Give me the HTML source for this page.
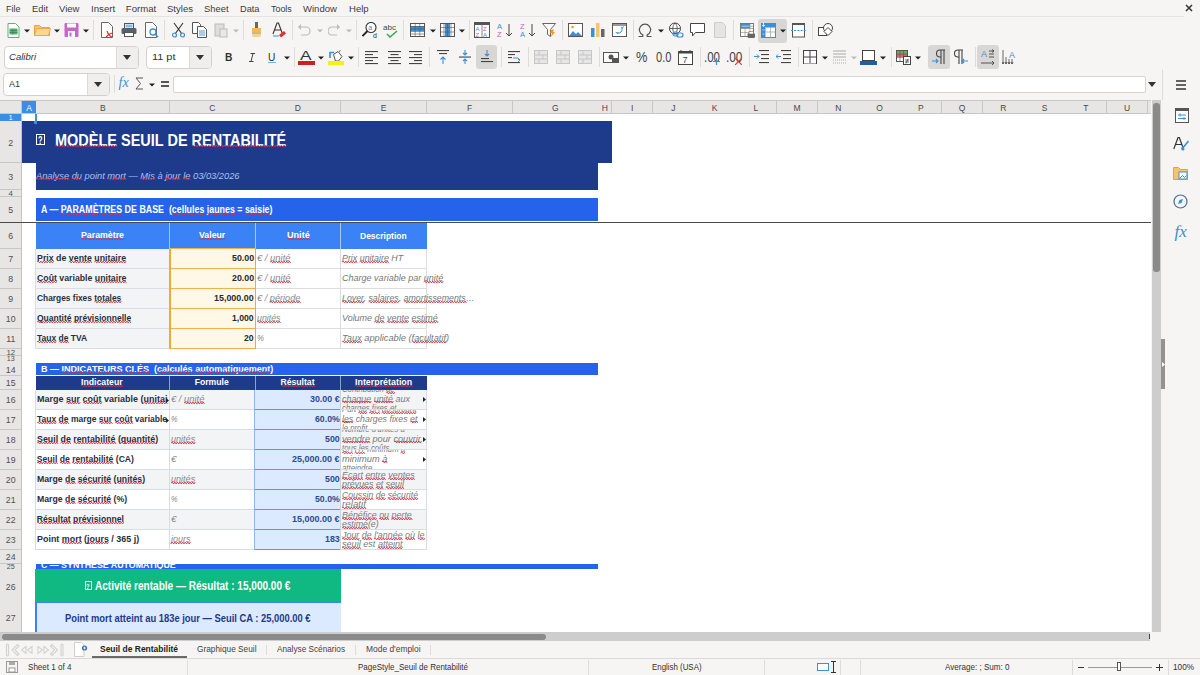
<!DOCTYPE html>
<html><head><meta charset="utf-8">
<style>
*{box-sizing:border-box;margin:0;padding:0}
html,body{width:1200px;height:675px;overflow:hidden;background:#f6f5f4;font-family:"Liberation Sans",sans-serif;position:relative}
.t{position:absolute;white-space:pre;line-height:normal;transform-origin:0 0}
.r{position:absolute}
.ic{position:absolute}
u{text-decoration:underline wavy #d83030;text-decoration-thickness:0.5px;text-underline-offset:0.5px}
</style></head><body>
<div class="t" style="left:5.80px;top:3.31px;font-size:9.60px;color:#3c3c3c;transform:scaleX(0.9374);">File</div>
<div class="t" style="left:31.70px;top:3.31px;font-size:9.60px;color:#3c3c3c;transform:scaleX(0.9732);">Edit</div>
<div class="t" style="left:58.70px;top:3.31px;font-size:9.60px;color:#3c3c3c;transform:scaleX(0.9934);">View</div>
<div class="t" style="left:90.80px;top:3.31px;font-size:9.60px;color:#3c3c3c;transform:scaleX(1.0077);">Insert</div>
<div class="t" style="left:125.80px;top:3.31px;font-size:9.60px;color:#3c3c3c;">Format</div>
<div class="t" style="left:167.00px;top:3.31px;font-size:9.60px;color:#3c3c3c;transform:scaleX(0.9945);">Styles</div>
<div class="t" style="left:204.20px;top:3.31px;font-size:9.60px;color:#3c3c3c;transform:scaleX(0.9765);">Sheet</div>
<div class="t" style="left:239.70px;top:3.31px;font-size:9.60px;color:#3c3c3c;transform:scaleX(0.9615);">Data</div>
<div class="t" style="left:271.20px;top:3.31px;font-size:9.60px;color:#3c3c3c;transform:scaleX(0.9280);">Tools</div>
<div class="t" style="left:303.30px;top:3.31px;font-size:9.60px;color:#3c3c3c;transform:scaleX(0.9927);">Window</div>
<div class="t" style="left:348.70px;top:3.31px;font-size:9.60px;color:#3c3c3c;transform:scaleX(0.9926);">Help</div>
<div class="r" style="left:0.00px;top:16.00px;width:1184.00px;height:1.00px;background:#e6e4e2;"></div>
<svg class="ic" style="left:6.50px;top:23.00px" width="13" height="15" viewBox="0 0 13 15"><path d="M1 .5h7.5l3.5 3.5v10.5h-11z" fill="#fff" stroke="#5cb474"/><rect x="2.5" y="5.5" width="8" height="6" fill="#5cb474"/><path d="M2.5 7.5h8M2.5 9.5h8M6 5.5v6" stroke="#2f6e44" stroke-width=".5"/></svg>
<svg class="ic" style="left:24.00px;top:29.00px" width="6" height="4" viewBox="0 0 6 4"><path d="M0 0.5h6l-3 3z" fill="#222"/></svg>
<svg class="ic" style="left:34.00px;top:23.00px" width="17" height="14" viewBox="0 0 17 14"><path d="M.5 2.5v10h15v-8h-8l-2-2h-5z" fill="#f7c46c" stroke="#e8a33d"/><path d="M.5 12.5l2-7h14l-2 7z" fill="#fbd88e" stroke="#e8a33d" stroke-width=".8"/></svg>
<svg class="ic" style="left:54.00px;top:29.00px" width="6" height="4" viewBox="0 0 6 4"><path d="M0 0.5h6l-3 3z" fill="#222"/></svg>
<svg class="ic" style="left:64.00px;top:22.00px" width="15" height="16" viewBox="0 0 15 16"><rect x=".5" y="1" width="14" height="14" rx="1" fill="#c767c9"/><rect x="3" y="1.5" width="9" height="4" fill="#fff"/><rect x="4" y="9" width="7" height="6" fill="#fff"/><rect x="5.5" y="10.5" width="2" height="4" fill="#c767c9"/></svg>
<svg class="ic" style="left:83.00px;top:29.00px" width="6" height="4" viewBox="0 0 6 4"><path d="M0 0.5h6l-3 3z" fill="#222"/></svg>
<div class="r" style="left:93.00px;top:20.00px;width:1.00px;height:20.00px;background:#dedcda;"></div>
<svg class="ic" style="left:100.00px;top:22.00px" width="14" height="16" viewBox="0 0 14 16"><path d="M1.5 .5h7l4 4v11h-11z" fill="#fff" stroke="#666"/><path d="M7 9c1 3 2 5 5 6M6 15c2-2 4-4 7-4" stroke="#e03030" stroke-width="1.2" fill="none"/></svg>
<svg class="ic" style="left:121.00px;top:23.00px" width="16" height="14" viewBox="0 0 16 14"><rect x="3.5" y=".5" width="9" height="5" fill="#fff" stroke="#555"/><rect x="4.5" y="1.5" width="7" height="3" fill="#7cc0f0"/><rect x=".5" y="5" width="15" height="6" rx="1.5" fill="#5a6069"/><rect x="3.5" y="9.5" width="9" height="4" fill="#fff" stroke="#555"/></svg>
<svg class="ic" style="left:144.00px;top:22.00px" width="15" height="16" viewBox="0 0 15 16"><path d="M1.5 .5h7l4 4v11h-11z" fill="#fff" stroke="#666"/><circle cx="9" cy="10" r="3" fill="#fff" stroke="#3a8fd6" stroke-width="1.3"/><path d="M11 12l3 3" stroke="#3a8fd6" stroke-width="1.5"/></svg>
<div class="r" style="left:164.00px;top:20.00px;width:1.00px;height:20.00px;background:#dedcda;"></div>
<svg class="ic" style="left:172.00px;top:22.00px" width="13" height="16" viewBox="0 0 13 16"><path d="M2 1l8 11M11 1l-8 11" stroke="#333" stroke-width="1.1"/><circle cx="2.5" cy="13" r="2" fill="none" stroke="#3a8fd6" stroke-width="1.2"/><circle cx="10.5" cy="13" r="2" fill="none" stroke="#3a8fd6" stroke-width="1.2"/></svg>
<svg class="ic" style="left:192.00px;top:22.00px" width="16" height="16" viewBox="0 0 16 16"><path d="M.5 .5h6l2 2v9h-8z" fill="#fff" stroke="#555"/><path d="M5.5 4.5h6l3 3v8h-9z" fill="#fff" stroke="#555"/><path d="M7 9h6M7 11h6M7 13h6" stroke="#3a8fd6" stroke-width=".9"/></svg>
<svg class="ic" style="left:214.00px;top:22.00px" width="14" height="16" viewBox="0 0 14 16"><rect x="1" y="2" width="9" height="12" fill="#ddd" stroke="#bbb"/><rect x="6" y="7" width="7" height="8" fill="#e8e8e8" stroke="#bbb"/></svg>
<svg class="ic" style="left:232.50px;top:29.00px" width="6" height="4" viewBox="0 0 6 4"><path d="M0 0.5h6l-3 3z" fill="#bbb"/></svg>
<div class="r" style="left:243.00px;top:20.00px;width:1.00px;height:20.00px;background:#dedcda;"></div>
<svg class="ic" style="left:251.00px;top:22.00px" width="11" height="16" viewBox="0 0 11 16"><rect x="4" y="0" width="3" height="6" fill="#666"/><path d="M1 6h9v4h-9z" fill="#f7b560"/><path d="M1 10h9l-.5 5h-8z" fill="#f9cf8a"/><path d="M1 11h9" stroke="#888" stroke-width=".7"/></svg>
<svg class="ic" style="left:272.00px;top:22.00px" width="14" height="16" viewBox="0 0 14 16"><path d="M1 12l4-11h1.5l4 11M2.5 8h6" stroke="#333" stroke-width="1.1" fill="none"/><path d="M1 14h6" stroke="#3a8fd6"/><path d="M7 13l5-4 2 2.5-5 4z" fill="#e03030"/></svg>
<div class="r" style="left:292.00px;top:20.00px;width:1.00px;height:20.00px;background:#dedcda;"></div>
<svg class="ic" style="left:297.00px;top:23.00px" width="14" height="14" viewBox="0 0 14 14"><path d="M3 4h6a4 4 0 010 8h-5" stroke="#bbb" stroke-width="1.2" fill="none"/><path d="M1 4l3-3v6z" fill="#bbb"/></svg>
<svg class="ic" style="left:317.00px;top:29.00px" width="6" height="4" viewBox="0 0 6 4"><path d="M0 0.5h6l-3 3z" fill="#bbb"/></svg>
<svg class="ic" style="left:328.00px;top:23.00px" width="13" height="14" viewBox="0 0 13 14"><path d="M10 4h-6a4 4 0 000 8h5" stroke="#bbb" stroke-width="1.2" fill="none"/><path d="M12 4l-3-3v6z" fill="#bbb"/></svg>
<svg class="ic" style="left:346.00px;top:29.00px" width="6" height="4" viewBox="0 0 6 4"><path d="M0 0.5h6l-3 3z" fill="#bbb"/></svg>
<div class="r" style="left:356.00px;top:20.00px;width:1.00px;height:20.00px;background:#dedcda;"></div>
<svg class="ic" style="left:362.00px;top:22.00px" width="16" height="16" viewBox="0 0 16 16"><circle cx="9" cy="5.5" r="5" fill="#fff" stroke="#333" stroke-width="1.1"/><text x="6.3" y="8" font-size="7" fill="#3a8fd6" font-family="Liberation Sans">a</text><path d="M5.5 9l-5 5" stroke="#222" stroke-width="1.8"/><text x="11" y="16" font-size="7" fill="#333" font-family="Liberation Sans">d</text></svg>
<svg class="ic" style="left:383.00px;top:22.00px" width="16" height="16" viewBox="0 0 16 16"><text x="0" y="8" font-size="8" fill="#444" font-family="Liberation Sans">abc</text><path d="M4 12l3 3 7-6" stroke="#3aaa5a" stroke-width="1.6" fill="none"/></svg>
<div class="r" style="left:403.00px;top:20.00px;width:1.00px;height:20.00px;background:#dedcda;"></div>
<svg class="ic" style="left:410.00px;top:23.00px" width="15" height="14" viewBox="0 0 15 14"><rect x=".5" y=".5" width="14" height="13" fill="#fff" stroke="#555"/><rect x="1" y="3" width="13" height="5" fill="#3a8fd6"/><path d="M5.2 1v12M9.8 1v12M1 3.5h13M1 6h13M1 8.5h13M1 11h13" stroke="#555" stroke-width=".6"/></svg>
<svg class="ic" style="left:429.50px;top:29.00px" width="6" height="4" viewBox="0 0 6 4"><path d="M0 0.5h6l-3 3z" fill="#222"/></svg>
<svg class="ic" style="left:440.00px;top:23.00px" width="15" height="14" viewBox="0 0 15 14"><rect x=".5" y=".5" width="14" height="13" fill="#fff" stroke="#555"/><rect x="5" y="1" width="5" height="12" fill="#3a8fd6"/><path d="M4 1v12M7.5 1v12M11 1v12M1 4.5h13M1 9h13" stroke="#555" stroke-width=".6"/></svg>
<svg class="ic" style="left:459.00px;top:29.00px" width="6" height="4" viewBox="0 0 6 4"><path d="M0 0.5h6l-3 3z" fill="#222"/></svg>
<div class="r" style="left:469.00px;top:20.00px;width:1.00px;height:20.00px;background:#dedcda;"></div>
<svg class="ic" style="left:474.00px;top:22.00px" width="16" height="16" viewBox="0 0 16 16"><rect x=".5" y=".5" width="15" height="15" fill="#fff" stroke="#555"/><rect x="1" y="1" width="14" height="2" fill="#555"/><text x="1.5" y="9" font-size="6" fill="#3a8fd6" font-family="Liberation Sans">A</text><text x="9" y="9" font-size="6" fill="#c060c0" font-family="Liberation Sans">Z</text><text x="1.5" y="15" font-size="6" fill="#c060c0" font-family="Liberation Sans">Z</text><text x="9" y="15" font-size="6" fill="#3a8fd6" font-family="Liberation Sans">A</text><path d="M8 3v13" stroke="#555" stroke-width=".7"/></svg>
<svg class="ic" style="left:497.00px;top:22.00px" width="16" height="16" viewBox="0 0 16 16"><text x="0" y="7" font-size="7.5" fill="#3a8fd6" font-family="Liberation Sans">A</text><text x="0" y="15" font-size="7.5" fill="#c060c0" font-family="Liberation Sans">Z</text><path d="M12 2v12M9 11l3 3 3-3" stroke="#444" stroke-width="1" fill="none"/></svg>
<svg class="ic" style="left:520.00px;top:22.00px" width="16" height="16" viewBox="0 0 16 16"><text x="0" y="7" font-size="7.5" fill="#c060c0" font-family="Liberation Sans">Z</text><text x="0" y="15" font-size="7.5" fill="#3a8fd6" font-family="Liberation Sans">A</text><path d="M12 2v12M9 11l3 3 3-3" stroke="#444" stroke-width="1" fill="none"/></svg>
<svg class="ic" style="left:542.00px;top:22.00px" width="14" height="16" viewBox="0 0 14 16"><path d="M.5 1.5h13l-5 6v7l-3-2v-5z" fill="#fff" stroke="#666"/><path d="M9 8l3-1-1 3 2 0-4 5 1-4h-2z" fill="#f59a20"/></svg>
<div class="r" style="left:562.00px;top:20.00px;width:1.00px;height:20.00px;background:#dedcda;"></div>
<svg class="ic" style="left:568.00px;top:23.00px" width="15" height="14" viewBox="0 0 15 14"><rect x=".5" y=".5" width="14" height="13" fill="#fff" stroke="#555"/><path d="M1 13l4-5 3 3 2-2 4 4z" fill="#3a8fd6"/><circle cx="4.5" cy="4" r="1.3" fill="#f59a20"/></svg>
<svg class="ic" style="left:591.00px;top:23.00px" width="14" height="14" viewBox="0 0 14 14"><rect x="0" y="5" width="3.5" height="9" fill="#3a8fd6"/><rect x="5" y="0" width="3.5" height="14" fill="#f7c46c"/><rect x="10" y="6" width="3.5" height="8" fill="#666"/></svg>
<svg class="ic" style="left:612.00px;top:23.00px" width="15" height="14" viewBox="0 0 15 14"><rect x=".5" y=".5" width="14" height="13" fill="#fff" stroke="#555"/><rect x="1" y="1" width="13" height="2" fill="#999"/><path d="M5 10a4 4 0 005-5M9 4l1.5 1 1-1.5M4 9l1 1.5 1.5-1" stroke="#3a8fd6" fill="none" stroke-width="1"/></svg>
<div class="r" style="left:633.00px;top:20.00px;width:1.00px;height:20.00px;background:#dedcda;"></div>
<svg class="ic" style="left:638.00px;top:23.00px" width="14" height="15" viewBox="0 0 14 15"><path d="M.5 13.5h4.3v-1.6A5.6 5.6 0 1 1 9.2 11.9v1.6h4.3" stroke="#555" stroke-width="1.2" fill="none"/></svg>
<svg class="ic" style="left:657.50px;top:29.00px" width="6" height="4" viewBox="0 0 6 4"><path d="M0 0.5h6l-3 3z" fill="#222"/></svg>
<svg class="ic" style="left:668.00px;top:22.00px" width="16" height="16" viewBox="0 0 16 16"><circle cx="7" cy="6.5" r="5.5" fill="#fff" stroke="#444"/><path d="M1.5 6.5h11M7 1c-3 3-3 8 0 11M7 1c3 3 3 8 0 11" stroke="#444" stroke-width=".8" fill="none"/><rect x="5" y="10" width="5" height="4" rx="2" fill="none" stroke="#3a8fd6" stroke-width="1.2"/><rect x="9" y="11" width="6" height="4" rx="2" fill="none" stroke="#3a8fd6" stroke-width="1.2"/></svg>
<svg class="ic" style="left:690.00px;top:23.00px" width="15" height="14" viewBox="0 0 15 14"><path d="M.5 .5h14v9h-9l-3 3.5v-3.5h-2z" fill="#fff" stroke="#444"/></svg>
<svg class="ic" style="left:714.00px;top:22.00px" width="12" height="16" viewBox="0 0 12 16"><path d="M.5 .5h8l3 3v12h-11z" fill="#e4e4e4" stroke="#ccc"/></svg>
<div class="r" style="left:733.00px;top:20.00px;width:1.00px;height:20.00px;background:#dedcda;"></div>
<svg class="ic" style="left:740.00px;top:22.50px" width="15" height="16" viewBox="0 0 15 16"><rect x=".5" y=".5" width="13" height="13" fill="#fff" stroke="#777"/><rect x="1" y="1" width="9" height="4.5" fill="#3a8fd6"/><path d="M5 1v12.5M10 1v12.5M1 3.2h12.5M1 5.5h12.5M1 9.5h12.5" stroke="#888" stroke-width=".6"/><path d="M1.5 3.2h8" stroke="#fff" stroke-width=".6"/><rect x="7.5" y="10" width="7.5" height="5" rx="1.5" fill="#666"/><rect x="9" y="8.5" width="4.5" height="2.5" fill="#fff" stroke="#666" stroke-width=".6"/></svg>
<div class="r" style="left:758.00px;top:19.00px;width:29.00px;height:23.50px;background:#d9d7d5;border-radius:3px;"></div>
<svg class="ic" style="left:760.50px;top:22.00px" width="15" height="16" viewBox="0 0 15 16"><rect x=".5" y="1.5" width="14" height="14" fill="#fff" stroke="#3a8fd6"/><rect x="1" y="2" width="13" height="3" fill="#3a8fd6"/><rect x="1" y="2" width="3.5" height="13" fill="#3a8fd6"/><path d="M4.5 5.5h10M4.5 10h10M9.5 5v10.5" stroke="#999" stroke-width=".7"/><path d="M2.5 .5v4M1 3l1.5 1.5L4 3" stroke="#fff" stroke-width=".8" fill="none"/><path d="M1.5 8h2M1.5 12h2" stroke="#fff" stroke-width=".6"/></svg>
<svg class="ic" style="left:780.00px;top:29.00px" width="6" height="4" viewBox="0 0 6 4"><path d="M0 0.5h6l-3 3z" fill="#222"/></svg>
<svg class="ic" style="left:791.00px;top:23.00px" width="15" height="15" viewBox="0 0 15 15"><rect x="1.5" y=".5" width="12" height="13.5" fill="#fff" stroke="#555"/><rect x="1.5" y=".5" width="12" height="1.5" fill="#555"/><path d="M0 7.5h15" stroke="#3a8fd6" stroke-dasharray="2 1.2" stroke-width="1"/></svg>
<div class="r" style="left:812.00px;top:20.00px;width:1.00px;height:20.00px;background:#dedcda;"></div>
<svg class="ic" style="left:818.00px;top:22.00px" width="15" height="16" viewBox="0 0 15 16"><rect x=".5" y="5.5" width="8" height="8" fill="#fff" stroke="#444"/><circle cx="10" cy="6" r="4.5" fill="#fff" stroke="#444"/><path d="M6 9.5l4 4 4-4-4-4z" fill="#fff" stroke="#444"/></svg>
<div class="r" style="left:3.50px;top:45.50px;width:135.50px;height:23.00px;background:#fff;border:1px solid #d3d1cf;border-radius:4px;"></div>
<div class="r" style="left:116.00px;top:46.50px;width:22.00px;height:21.00px;background:#efeeed;border-left:1px solid #dcdad8;border-radius:0 3px 3px 0;"></div>
<div class="t" style="left:9.20px;top:51.81px;font-size:9.05px;color:#333;font-style:italic;transform:scaleX(1.0563);">Calibri</div>
<svg class="ic" style="left:123.00px;top:55.00px" width="8" height="5" viewBox="0 0 8 5"><path d="M0 0h8l-4 5z" fill="#333"/></svg>
<div class="r" style="left:146.00px;top:45.50px;width:66.00px;height:23.00px;background:#fff;border:1px solid #d3d1cf;border-radius:4px;"></div>
<div class="r" style="left:189.00px;top:46.50px;width:22.00px;height:21.00px;background:#efeeed;border-left:1px solid #dcdad8;border-radius:0 3px 3px 0;"></div>
<div class="t" style="left:152.00px;top:51.81px;font-size:9.05px;color:#333;transform:scaleX(1.2073);">11 pt</div>
<svg class="ic" style="left:196.00px;top:55.00px" width="8" height="5" viewBox="0 0 8 5"><path d="M0 0h8l-4 5z" fill="#333"/></svg>
<div class="t" style="left:224.70px;top:50.67px;font-size:11.52px;color:#333;font-weight:bold;transform:scaleX(0.8894);">B</div>
<svg class="ic" style="left:248.50px;top:52.50px" width="6" height="9" viewBox="0 0 6 9"><path d="M1.5 .5h4.5M0 8.5h4.5M4 .5L2 8.5" stroke="#444" stroke-width="1" fill="none"/></svg>
<div class="t" style="left:268.10px;top:50.70px;font-size:11.39px;color:#333;transform:scaleX(0.8882);">U</div>
<div class="r" style="left:268.00px;top:62.20px;width:8.00px;height:1.00px;background:#7ab0e0;"></div>
<svg class="ic" style="left:284.00px;top:56.30px" width="6" height="4" viewBox="0 0 6 4"><path d="M0 0.5h6l-3 3z" fill="#222"/></svg>
<div class="r" style="left:294.00px;top:47.00px;width:1.00px;height:20.00px;background:#dedcda;"></div>
<div class="t" style="left:299.50px;top:49.13px;font-size:12.35px;color:#333;transform:scaleX(1.3966);">A</div>
<div class="r" style="left:298.00px;top:61.00px;width:16.50px;height:3.50px;background:#c9211e;"></div>
<svg class="ic" style="left:318.00px;top:56.30px" width="6" height="4" viewBox="0 0 6 4"><path d="M0 0.5h6l-3 3z" fill="#222"/></svg>
<svg class="ic" style="left:328.00px;top:50.00px" width="16" height="12" viewBox="0 0 16 12"><path d="M2 8V2.5h4" stroke="#3a8fd6" stroke-width="1.6" fill="none"/><path d="M5.5 4.5l4.5-3 4 5-3.5 4.5h-3z" fill="#fff" stroke="#555" stroke-width="1"/><path d="M11 1.5l1.5-1" stroke="#555"/></svg>
<div class="r" style="left:328.00px;top:61.00px;width:16.00px;height:3.50px;background:#f2f20a;"></div>
<svg class="ic" style="left:347.50px;top:56.30px" width="6" height="4" viewBox="0 0 6 4"><path d="M0 0.5h6l-3 3z" fill="#222"/></svg>
<div class="r" style="left:358.00px;top:47.00px;width:1.00px;height:20.00px;background:#dedcda;"></div>
<svg class="ic" style="left:365.00px;top:51.00px" width="14" height="14" viewBox="0 0 14 14"><rect x="0" y="0" width="13" height="1.1" fill="#444"/><rect x="0" y="3" width="8" height="1.1" fill="#444"/><rect x="0" y="6" width="13" height="1.1" fill="#444"/><rect x="0" y="9" width="8" height="1.1" fill="#444"/><rect x="0" y="12" width="13" height="1.1" fill="#444"/></svg>
<svg class="ic" style="left:387.50px;top:51.00px" width="14" height="14" viewBox="0 0 14 14"><rect x="0" y="0" width="13" height="1.1" fill="#444"/><rect x="2.5" y="3" width="8" height="1.1" fill="#444"/><rect x="0" y="6" width="13" height="1.1" fill="#444"/><rect x="2.5" y="9" width="8" height="1.1" fill="#444"/><rect x="0" y="12" width="13" height="1.1" fill="#444"/></svg>
<svg class="ic" style="left:409.00px;top:51.00px" width="14" height="14" viewBox="0 0 14 14"><rect x="0" y="0" width="13" height="1.1" fill="#444"/><rect x="5" y="3" width="8" height="1.1" fill="#444"/><rect x="0" y="6" width="13" height="1.1" fill="#444"/><rect x="5" y="9" width="8" height="1.1" fill="#444"/><rect x="0" y="12" width="13" height="1.1" fill="#444"/></svg>
<div class="r" style="left:429.00px;top:47.00px;width:1.00px;height:20.00px;background:#dedcda;"></div>
<svg class="ic" style="left:436.50px;top:49.00px" width="13" height="16" viewBox="0 0 13 16"><rect x="0" y="1" width="12" height="1.1" fill="#444"/><rect x="2" y="4" width="8" height="1.1" fill="#444"/><path d="M6 15V8M3.5 10.5L6 8l2.5 2.5" stroke="#3a8fd6" stroke-width="1.1" fill="none"/></svg>
<svg class="ic" style="left:459.00px;top:49.00px" width="12" height="16" viewBox="0 0 12 16"><rect x="0" y="7.5" width="12" height="1.1" fill="#444"/><path d="M6 1v5M4 4l2 2 2-2M6 15v-5M4 12l2-2 2 2" stroke="#3a8fd6" stroke-width="1.1" fill="none"/></svg>
<div class="r" style="left:475.50px;top:45.00px;width:21.50px;height:24.00px;background:#d9d7d5;border-radius:3px;"></div>
<svg class="ic" style="left:480.50px;top:49.00px" width="12" height="16" viewBox="0 0 12 16"><rect x="0" y="12" width="12" height="1.1" fill="#444"/><rect x="0" y="9" width="8" height="1.1" fill="#444"/><path d="M6 1v6M4 5l2 2 2-2" stroke="#3a8fd6" stroke-width="1.1" fill="none"/></svg>
<div class="r" style="left:500.50px;top:47.00px;width:1.00px;height:20.00px;background:#dedcda;"></div>
<svg class="ic" style="left:507.50px;top:49.00px" width="14" height="16" viewBox="0 0 14 16"><rect x="0" y="2" width="12" height="1.1" fill="#444"/><rect x="0" y="5" width="7" height="1.1" fill="#444"/><rect x="0" y="8" width="4" height="1.1" fill="#444"/><rect x="0" y="13" width="12" height="1.1" fill="#444"/><path d="M5 9h5l2 2-2 2M12 11l-2-1" stroke="#3a8fd6" stroke-width="1" fill="none"/></svg>
<div class="r" style="left:527.50px;top:47.00px;width:1.00px;height:20.00px;background:#dedcda;"></div>
<svg class="ic" style="left:534.00px;top:50.00px" width="14" height="14" viewBox="0 0 14 14"><rect x=".5" y=".5" width="13" height="13" fill="#e6e6e6" stroke="#c6c6c6"/><path d="M1 5h12M1 9h12M5 1v4M9 5v4M5 9v4" stroke="#c6c6c6"/></svg>
<svg class="ic" style="left:556.00px;top:50.00px" width="14" height="14" viewBox="0 0 14 14"><rect x=".5" y=".5" width="13" height="13" fill="#e6e6e6" stroke="#c6c6c6"/><path d="M1 5h12M1 9h12M5 1v4M9 5v4M5 9v4" stroke="#c6c6c6"/></svg>
<svg class="ic" style="left:578.00px;top:50.00px" width="14" height="14" viewBox="0 0 14 14"><rect x=".5" y=".5" width="13" height="13" fill="#e6e6e6" stroke="#c6c6c6"/><path d="M1 5h12M1 9h12M5 1v4M9 5v4M5 9v4" stroke="#c6c6c6"/></svg>
<div class="r" style="left:598.50px;top:47.00px;width:1.00px;height:20.00px;background:#dedcda;"></div>
<svg class="ic" style="left:603.00px;top:50.00px" width="16" height="14" viewBox="0 0 16 14"><rect x=".5" y="2.5" width="15" height="10" fill="#fff" stroke="#555"/><circle cx="8" cy="7" r="2.5" fill="#555"/><rect x="9" y="8" width="6" height="5" fill="#555"/></svg>
<svg class="ic" style="left:623.00px;top:56.30px" width="6" height="4" viewBox="0 0 6 4"><path d="M0 0.5h6l-3 3z" fill="#222"/></svg>
<div class="t" style="left:636.00px;top:50.09px;font-size:13.72px;color:#444;transform:scaleX(0.9348);">%</div>
<div class="t" style="left:655.60px;top:50.09px;font-size:13.72px;color:#444;transform:scaleX(0.8077);">0.0</div>
<svg class="ic" style="left:678.00px;top:49.00px" width="15" height="16" viewBox="0 0 15 16"><rect x=".5" y="2.5" width="14" height="13" fill="#fff" stroke="#444"/><rect x=".5" y="2.5" width="14" height="2" fill="#444"/><path d="M3 1v3M12 1v3" stroke="#444"/><text x="4.5" y="14" font-size="9" fill="#444" font-family="Liberation Sans">7</text></svg>
<div class="r" style="left:699.50px;top:47.00px;width:1.00px;height:20.00px;background:#dedcda;"></div>
<div class="t" style="left:704.00px;top:50.09px;font-size:13.72px;color:#444;transform:scaleX(0.8392);">.00</div>
<svg class="ic" style="left:713.00px;top:58.00px" width="7" height="7" viewBox="0 0 7 7"><path d="M3.5 0v7M0 3.5h7" stroke="#3a8fd6" stroke-width="1.2"/></svg>
<div class="t" style="left:726.00px;top:50.09px;font-size:13.72px;color:#444;transform:scaleX(0.8602);">.00</div>
<svg class="ic" style="left:735.00px;top:58.00px" width="7" height="7" viewBox="0 0 7 7"><path d="M0 0l7 7M7 0l-7 7" stroke="#e03030" stroke-width="1.2"/></svg>
<div class="r" style="left:748.50px;top:47.00px;width:1.00px;height:20.00px;background:#dedcda;"></div>
<svg class="ic" style="left:754.00px;top:50.00px" width="15" height="14" viewBox="0 0 15 14"><rect x="5" y="0" width="10" height="1.1" fill="#444"/><rect x="7" y="4" width="8" height="1.1" fill="#444"/><rect x="7" y="8" width="8" height="1.1" fill="#444"/><rect x="5" y="12" width="10" height="1.1" fill="#444"/><path d="M0 6.5h5M3 4.5l2 2-2 2" stroke="#3a8fd6" stroke-width="1" fill="none"/></svg>
<svg class="ic" style="left:776.00px;top:50.00px" width="15" height="14" viewBox="0 0 15 14"><rect x="5" y="0" width="10" height="1.1" fill="#444"/><rect x="7" y="4" width="8" height="1.1" fill="#444"/><rect x="7" y="8" width="8" height="1.1" fill="#444"/><rect x="5" y="12" width="10" height="1.1" fill="#444"/><path d="M0 6.5h5M2 4.5l-2 2 2 2" stroke="#3a8fd6" stroke-width="1" fill="none"/></svg>
<div class="r" style="left:797.50px;top:47.00px;width:1.00px;height:20.00px;background:#dedcda;"></div>
<svg class="ic" style="left:803.00px;top:50.00px" width="14" height="14" viewBox="0 0 14 14"><rect x=".5" y=".5" width="13" height="13" fill="#fff" stroke="#444"/><path d="M7 1v12M1 7h12" stroke="#444"/><path d="M1 13.5h12" stroke="#f59a20"/></svg>
<svg class="ic" style="left:821.50px;top:56.30px" width="6" height="4" viewBox="0 0 6 4"><path d="M0 0.5h6l-3 3z" fill="#222"/></svg>
<svg class="ic" style="left:833.00px;top:50.00px" width="13" height="14" viewBox="0 0 13 14"><path d="M0 1h13M0 4h13M0 7h13" stroke="#aaa" stroke-width="1.2"/><path d="M0 10h13M0 13h13" stroke="#aaa" stroke-dasharray="1 1"/></svg>
<svg class="ic" style="left:851.00px;top:56.30px" width="6" height="4" viewBox="0 0 6 4"><path d="M0 0.5h6l-3 3z" fill="#bbb"/></svg>
<svg class="ic" style="left:860.00px;top:50.00px" width="17" height="15" viewBox="0 0 17 15"><rect x="2.5" y=".5" width="12" height="10" fill="#fff" stroke="#444"/><rect x="0" y="11" width="17" height="4" fill="#1f5fa8"/></svg>
<svg class="ic" style="left:880.00px;top:56.30px" width="6" height="4" viewBox="0 0 6 4"><path d="M0 0.5h6l-3 3z" fill="#222"/></svg>
<div class="r" style="left:890.50px;top:47.00px;width:1.00px;height:20.00px;background:#dedcda;"></div>
<svg class="ic" style="left:896.00px;top:50.00px" width="15" height="15" viewBox="0 0 15 15"><rect x=".5" y=".5" width="11" height="11" fill="#fff" stroke="#555"/><rect x="1" y="1" width="10" height="3" fill="#5fb060"/><rect x="1" y="4" width="10" height="3" fill="#e06060"/><path d="M4 1v10M7.5 1v10M1 4h10M1 7.5h10" stroke="#555" stroke-width=".6"/><rect x="7.5" y="6.5" width="7" height="8" fill="#fff" stroke="#444"/><path d="M9 10h4M9 12h4M12 9l-2 4.5" stroke="#444" stroke-width=".8"/></svg>
<svg class="ic" style="left:915.00px;top:56.30px" width="6" height="4" viewBox="0 0 6 4"><path d="M0 0.5h6l-3 3z" fill="#222"/></svg>
<div class="r" style="left:927.50px;top:45.00px;width:22.00px;height:24.00px;background:#d9d7d5;border-radius:3px;"></div>
<svg class="ic" style="left:932.00px;top:49.00px" width="14" height="16" viewBox="0 0 14 16"><path d="M9 1v14M12 1v14M13 1H8a3.5 3.5 0 000 7h1" stroke="#444" stroke-width="1.1" fill="none"/><path d="M0 12h6M4 10l2 2-2 2" stroke="#3a8fd6" stroke-width="1.1" fill="none"/></svg>
<svg class="ic" style="left:953.50px;top:49.00px" width="14" height="16" viewBox="0 0 14 16"><path d="M5 1v14M8 1v14M9 1H4a3.5 3.5 0 000 7h1" stroke="#444" stroke-width="1.1" fill="none"/><path d="M14 12h-6M10 10l-2 2 2 2" stroke="#3a8fd6" stroke-width="1.1" fill="none"/></svg>
<div class="r" style="left:974.50px;top:47.00px;width:1.00px;height:20.00px;background:#dedcda;"></div>
<div class="r" style="left:977.00px;top:45.00px;width:21.50px;height:24.00px;background:#d9d7d5;border-radius:3px;"></div>
<svg class="ic" style="left:981.00px;top:49.00px" width="14" height="16" viewBox="0 0 14 16"><text x="0" y="8" font-size="9" fill="#3a8fd6" font-family="Liberation Sans">A</text><path d="M8 2h5M8 5h5M8 8h5M11 .5l2 1.5-2 1.5M0 14h13M11 12l2 2-2 2" stroke="#444" stroke-width=".9" fill="none"/></svg>
<svg class="ic" style="left:1002.00px;top:49.00px" width="15" height="16" viewBox="0 0 15 16"><text x="7" y="9" font-size="9" fill="#3a8fd6" font-family="Liberation Sans">A</text><path d="M1 1v14M4 8v7M7 10v5M10 10v5M0 13l1 2 1-2M3 13l1 2 1-2M6 13l1 2 1-2M9 13l1 2 1-2" stroke="#444" stroke-width=".8" fill="none"/></svg>
<div class="r" style="left:3.00px;top:72.50px;width:107.00px;height:23.00px;background:#fff;border:1px solid #d3d1cf;border-radius:4px;"></div>
<div class="r" style="left:87.00px;top:73.50px;width:22.00px;height:21.00px;background:#efeeed;border-left:1px solid #dcdad8;border-radius:0 3px 3px 0;"></div>
<div class="t" style="left:9.00px;top:79.10px;font-size:8.50px;color:#333;transform:scaleX(1.0575);">A1</div>
<svg class="ic" style="left:94.00px;top:82.00px" width="8" height="5" viewBox="0 0 8 5"><path d="M0 0h8l-4 5z" fill="#333"/></svg>
<div class="r" style="left:113.50px;top:75.00px;width:1.00px;height:18.00px;background:#dedcda;"></div>
<div class="t" style="left:118.5px;top:75px;font-family:'Liberation Serif';font-style:italic;font-size:14px;color:#3a8fd6">fx</div>
<svg class="ic" style="left:134.50px;top:77.00px" width="9" height="13" viewBox="0 0 9 13"><path d="M8 1H1l4.5 5.5L1 12h7" stroke="#555" stroke-width="1" fill="none"/></svg>
<svg class="ic" style="left:149.00px;top:82.50px" width="6" height="4" viewBox="0 0 6 4"><path d="M0 0.5h6l-3 3z" fill="#222"/></svg>
<div class="r" style="left:161.00px;top:81.00px;width:8.00px;height:1.60px;background:#555;"></div>
<div class="r" style="left:161.00px;top:85.20px;width:8.00px;height:1.60px;background:#555;"></div>
<div class="r" style="left:173.00px;top:76.00px;width:972.50px;height:16.50px;background:#fff;border:1px solid #d6d4d2;border-radius:2px;"></div>
<svg class="ic" style="left:1148.00px;top:81.50px" width="8" height="5" viewBox="0 0 8 5"><path d="M0 0h8l-4 5z" fill="#333"/></svg>
<div class="r" style="left:1161.50px;top:70.00px;width:1.00px;height:588.00px;background:#dddbd9;"></div>
<svg class="ic" style="left:1185.00px;top:4.00px" width="8" height="8" viewBox="0 0 8 8"><path d="M1 1l6 6M7 1L1 7" stroke="#333" stroke-width="1.5"/></svg>
<svg class="ic" style="left:1176.00px;top:79.50px" width="10" height="10" viewBox="0 0 10 10"><path d="M0 1h10M0 5h10M0 9h10" stroke="#333" stroke-width="1.3"/></svg>
<svg class="ic" style="left:1174.50px;top:107.50px" width="14" height="15" viewBox="0 0 14 15"><rect x=".5" y=".5" width="13" height="14" fill="#fff" stroke="#555"/><rect x="1" y="1" width="12" height="2" fill="#555"/><path d="M3 7h8M3 10.5h8" stroke="#3a8fd6"/><path d="M5 5.5v3M9 9v3" stroke="#3a8fd6"/></svg>
<svg class="ic" style="left:1173.00px;top:136.00px" width="16" height="16" viewBox="0 0 16 16"><path d="M.8 13L5 1.5h1.3L10.5 13M2.5 8.5h6" stroke="#333" stroke-width="1.2" fill="none"/><path d="M9 13.5c0-2 1-3 2-3l4.5-5.5" stroke="#3a8fd6" stroke-width="1.6" fill="none"/><circle cx="10" cy="13" r="1.5" fill="#3a8fd6"/></svg>
<svg class="ic" style="left:1173.00px;top:166.00px" width="15" height="14" viewBox="0 0 15 14"><path d="M.5 1.5v12h14v-10h-7l-2-2z" fill="#f7c46c" stroke="#e8a33d"/><rect x="6" y="6" width="8" height="7" fill="#fff" stroke="#3a8fd6"/><path d="M6.5 12.5l3-3 2 2 2-2" stroke="#3a8fd6" fill="none"/></svg>
<svg class="ic" style="left:1173.00px;top:194.00px" width="15" height="15" viewBox="0 0 15 15"><circle cx="7.5" cy="7.5" r="6.5" fill="none" stroke="#4a6e96" stroke-width="1.2"/><path d="M10 5l-1.5 4L5 10l1.5-4z" fill="#3a8fd6"/></svg>
<div class="t" style="left:1174.5px;top:222px;font-family:'Liberation Serif';font-style:italic;font-size:17px;color:#3a8fd6">fx</div>
<div class="r" style="left:0.00px;top:632.00px;width:1150.00px;height:9.00px;background:#cdcdcd;"></div>
<div class="r" style="left:2.00px;top:634.00px;width:544.00px;height:5.50px;background:#8a8a8a;border-radius:3px;"></div>
<div class="r" style="left:1150.00px;top:100.00px;width:13.00px;height:532.00px;background:#f6f5f4;"></div>
<div class="r" style="left:1151.50px;top:100.00px;width:9.50px;height:532.50px;background:#cdcdcd;"></div>
<div class="r" style="left:1153.00px;top:103.00px;width:6.50px;height:169.00px;background:#8a8a8a;border-radius:3px;"></div>
<div class="r" style="left:1148.50px;top:634.00px;width:1.00px;height:5.00px;background:#444;"></div>
<div class="r" style="left:1161.00px;top:339.00px;width:4.00px;height:49.50px;background:#929292;"></div>
<svg class="ic" style="left:1162.00px;top:361.50px" width="3" height="5" viewBox="0 0 3 5"><path d="M0 0l3 2.5-3 2.5z" fill="#fff"/></svg>
<div class="r" style="left:1150.00px;top:632.00px;width:13.00px;height:9.00px;background:#f6f5f4;"></div>
<div class="r" style="left:0.00px;top:641.00px;width:1163.00px;height:17.00px;background:#f6f5f4;"></div>
<svg class="ic" style="left:5.00px;top:643.00px" width="62" height="14" viewBox="0 0 62 14"><g fill="none" stroke="#d2d2d2" stroke-width="1.1"><rect x="1.5" y="1" width="2" height="12" rx="1"/><path d="M12.5 1.5L7 7l5.5 5.5 1.5-1.5L10 7l4-4z"/><path d="M21 3.5l-4.5 3.5 4.5 3.5zM27 3.5l-4.5 3.5 4.5 3.5z"/><path d="M33 3.5l4.5 3.5-4.5 3.5zM39 3.5l4.5 3.5-4.5 3.5z"/><path d="M47 1.5L52.5 7 47 12.5 45.5 11l4-4-4-4z"/><rect x="56" y="1" width="2" height="12" rx="1"/></g></svg>
<svg class="ic" style="left:74.00px;top:642.00px" width="14" height="15" viewBox="0 0 14 15"><path d="M.5 .5h7l2.5 2.5v11.5h-9.5z" fill="#fff" stroke="#cfcfcf"/><circle cx="10.5" cy="6" r="2.6" fill="#3a6fc0"/><path d="M10.5 4.6v2.8M9.1 6h2.8" stroke="#fff" stroke-width=".8"/></svg>
<div class="t" style="left:100.00px;top:644.16px;font-size:9.33px;color:#222;font-weight:bold;transform:scaleX(0.9069);">Seuil de Rentabilité</div>
<div class="r" style="left:92.00px;top:656.00px;width:94.50px;height:2.00px;background:#6a6a6a;"></div>
<div class="t" style="left:196.50px;top:644.16px;font-size:9.33px;color:#444;transform:scaleX(0.8897);">Graphique Seuil</div>
<div class="r" style="left:266.00px;top:645.00px;width:1.00px;height:10.00px;background:#dedcda;"></div>
<div class="t" style="left:276.50px;top:644.16px;font-size:9.33px;color:#444;transform:scaleX(0.8803);">Analyse Scénarios</div>
<div class="r" style="left:355.00px;top:645.00px;width:1.00px;height:10.00px;background:#dedcda;"></div>
<div class="t" style="left:365.50px;top:644.16px;font-size:9.33px;color:#444;transform:scaleX(0.9030);">Mode d&#x27;emploi</div>
<div class="r" style="left:429.50px;top:645.00px;width:1.00px;height:10.00px;background:#dedcda;"></div>
<div class="r" style="left:0.00px;top:657.50px;width:1200.00px;height:1.00px;background:#dcdad8;"></div>
<svg class="ic" style="left:6.00px;top:661.00px" width="12" height="12" viewBox="0 0 12 12"><rect x=".5" y=".5" width="11" height="11" fill="#f4f4f4" stroke="#999"/><rect x="3" y="1" width="6" height="3" fill="#aaa"/><rect x="3" y="7" width="6" height="4" fill="#fff" stroke="#999"/></svg>
<div class="t" style="left:27.50px;top:661.86px;font-size:9.33px;color:#333;transform:scaleX(0.8649);">Sheet 1 of 4</div>
<div class="r" style="left:186.50px;top:660.00px;width:1.00px;height:15.00px;background:#dedcda;"></div>
<div class="t" style="left:357.50px;top:661.86px;font-size:9.33px;color:#333;transform:scaleX(0.8590);">PageStyle_Seuil de Rentabilité</div>
<div class="r" style="left:588.00px;top:660.00px;width:1.00px;height:15.00px;background:#dedcda;"></div>
<div class="t" style="left:652.00px;top:661.86px;font-size:9.33px;color:#333;transform:scaleX(0.8453);">English (USA)</div>
<div class="r" style="left:764.00px;top:660.00px;width:1.00px;height:15.00px;background:#dedcda;"></div>
<svg class="ic" style="left:817.00px;top:663.00px" width="12" height="8" viewBox="0 0 12 8"><rect x=".5" y=".5" width="11" height="7" fill="#fff" stroke="#3a8fd6"/></svg>
<svg class="ic" style="left:831.00px;top:661.00px" width="5" height="12" viewBox="0 0 5 12"><path d="M0 .5h5M0 11.5h5M2.5 .5v11" stroke="#333"/></svg>
<div class="r" style="left:840.00px;top:660.00px;width:1.00px;height:15.00px;background:#dedcda;"></div>
<div class="r" style="left:860.00px;top:660.00px;width:1.00px;height:15.00px;background:#dedcda;"></div>
<div class="t" style="left:944.50px;top:661.86px;font-size:9.33px;color:#333;transform:scaleX(0.8661);">Average: ; Sum: 0</div>
<div class="r" style="left:1071.50px;top:660.00px;width:1.00px;height:15.00px;background:#dedcda;"></div>
<div class="r" style="left:1078.00px;top:666.50px;width:6.00px;height:1.00px;background:#333;"></div>
<div class="r" style="left:1088.00px;top:666.50px;width:64.00px;height:1.00px;background:#999;"></div>
<div class="r" style="left:1117.00px;top:662.00px;width:4.00px;height:9.00px;background:#fff;border:1px solid #555;"></div>
<div class="r" style="left:1155.50px;top:666.50px;width:7.00px;height:1.00px;background:#333;"></div>
<div class="r" style="left:1158.50px;top:663.50px;width:1.00px;height:7.00px;background:#333;"></div>
<div class="r" style="left:1168.00px;top:660.00px;width:1.00px;height:15.00px;background:#dedcda;"></div>
<div class="t" style="left:1173.00px;top:661.86px;font-size:9.33px;color:#333;transform:scaleX(0.8804);">100%</div>
<div class="r" style="left:0.00px;top:100.00px;width:1151.00px;height:532.00px;background:#fff;"></div>
<div class="r" style="left:0.00px;top:100.00px;width:1151.00px;height:14.00px;background:#e7e6e5;"></div>
<div class="r" style="left:22.00px;top:100.00px;width:14.00px;height:13.50px;background:#3d8de0;"></div>
<div class="r" style="left:35.50px;top:100.00px;width:1.00px;height:13.50px;background:#c8c7c6;"></div>
<div class="r" style="left:36.00px;top:100.00px;width:133.50px;height:13.50px;background:#e7e6e5;"></div>
<div class="r" style="left:169.00px;top:100.00px;width:1.00px;height:13.50px;background:#c8c7c6;"></div>
<div class="r" style="left:169.50px;top:100.00px;width:85.50px;height:13.50px;background:#e7e6e5;"></div>
<div class="r" style="left:254.50px;top:100.00px;width:1.00px;height:13.50px;background:#c8c7c6;"></div>
<div class="r" style="left:255.00px;top:100.00px;width:85.50px;height:13.50px;background:#e7e6e5;"></div>
<div class="r" style="left:340.00px;top:100.00px;width:1.00px;height:13.50px;background:#c8c7c6;"></div>
<div class="r" style="left:340.50px;top:100.00px;width:86.00px;height:13.50px;background:#e7e6e5;"></div>
<div class="r" style="left:426.00px;top:100.00px;width:1.00px;height:13.50px;background:#c8c7c6;"></div>
<div class="r" style="left:426.50px;top:100.00px;width:86.00px;height:13.50px;background:#e7e6e5;"></div>
<div class="r" style="left:512.00px;top:100.00px;width:1.00px;height:13.50px;background:#c8c7c6;"></div>
<div class="r" style="left:512.50px;top:100.00px;width:85.50px;height:13.50px;background:#e7e6e5;"></div>
<div class="r" style="left:597.50px;top:100.00px;width:1.00px;height:13.50px;background:#c8c7c6;"></div>
<div class="r" style="left:598.00px;top:100.00px;width:13.50px;height:13.50px;background:#e7e6e5;"></div>
<div class="r" style="left:611.00px;top:100.00px;width:1.00px;height:13.50px;background:#c8c7c6;"></div>
<div class="r" style="left:611.50px;top:100.00px;width:41.25px;height:13.50px;background:#e7e6e5;"></div>
<div class="r" style="left:652.25px;top:100.00px;width:1.00px;height:13.50px;background:#c8c7c6;"></div>
<div class="r" style="left:652.75px;top:100.00px;width:41.25px;height:13.50px;background:#e7e6e5;"></div>
<div class="r" style="left:693.50px;top:100.00px;width:1.00px;height:13.50px;background:#c8c7c6;"></div>
<div class="r" style="left:694.00px;top:100.00px;width:41.25px;height:13.50px;background:#e7e6e5;"></div>
<div class="r" style="left:734.75px;top:100.00px;width:1.00px;height:13.50px;background:#c8c7c6;"></div>
<div class="r" style="left:735.25px;top:100.00px;width:41.25px;height:13.50px;background:#e7e6e5;"></div>
<div class="r" style="left:776.00px;top:100.00px;width:1.00px;height:13.50px;background:#c8c7c6;"></div>
<div class="r" style="left:776.50px;top:100.00px;width:41.25px;height:13.50px;background:#e7e6e5;"></div>
<div class="r" style="left:817.25px;top:100.00px;width:1.00px;height:13.50px;background:#c8c7c6;"></div>
<div class="r" style="left:817.75px;top:100.00px;width:41.25px;height:13.50px;background:#e7e6e5;"></div>
<div class="r" style="left:858.50px;top:100.00px;width:1.00px;height:13.50px;background:#c8c7c6;"></div>
<div class="r" style="left:859.00px;top:100.00px;width:41.25px;height:13.50px;background:#e7e6e5;"></div>
<div class="r" style="left:899.75px;top:100.00px;width:1.00px;height:13.50px;background:#c8c7c6;"></div>
<div class="r" style="left:900.25px;top:100.00px;width:41.25px;height:13.50px;background:#e7e6e5;"></div>
<div class="r" style="left:941.00px;top:100.00px;width:1.00px;height:13.50px;background:#c8c7c6;"></div>
<div class="r" style="left:941.50px;top:100.00px;width:41.25px;height:13.50px;background:#e7e6e5;"></div>
<div class="r" style="left:982.25px;top:100.00px;width:1.00px;height:13.50px;background:#c8c7c6;"></div>
<div class="r" style="left:982.75px;top:100.00px;width:41.25px;height:13.50px;background:#e7e6e5;"></div>
<div class="r" style="left:1023.50px;top:100.00px;width:1.00px;height:13.50px;background:#c8c7c6;"></div>
<div class="r" style="left:1024.00px;top:100.00px;width:41.25px;height:13.50px;background:#e7e6e5;"></div>
<div class="r" style="left:1064.75px;top:100.00px;width:1.00px;height:13.50px;background:#c8c7c6;"></div>
<div class="r" style="left:1065.25px;top:100.00px;width:41.25px;height:13.50px;background:#e7e6e5;"></div>
<div class="r" style="left:1106.00px;top:100.00px;width:1.00px;height:13.50px;background:#c8c7c6;"></div>
<div class="r" style="left:1106.50px;top:100.00px;width:41.25px;height:13.50px;background:#e7e6e5;"></div>
<div class="r" style="left:1147.25px;top:100.00px;width:1.00px;height:13.50px;background:#c8c7c6;"></div>
<div class="r" style="left:0.00px;top:113.00px;width:1151.00px;height:1.00px;background:#c8c7c6;"></div>
<div class="r" style="left:0.00px;top:99.60px;width:1151.00px;height:1.00px;background:#c8c7c6;"></div>
<div class="t" style="left:26.16px;top:102.50px;font-size:8.50px;color:#fff;">A</div>
<div class="t" style="left:99.91px;top:102.50px;font-size:8.50px;color:#484848;">B</div>
<div class="t" style="left:209.18px;top:102.50px;font-size:8.50px;color:#484848;">C</div>
<div class="t" style="left:294.68px;top:102.50px;font-size:8.50px;color:#484848;">D</div>
<div class="t" style="left:380.66px;top:102.50px;font-size:8.50px;color:#484848;">E</div>
<div class="t" style="left:466.90px;top:102.50px;font-size:8.50px;color:#484848;">F</div>
<div class="t" style="left:551.94px;top:102.50px;font-size:8.50px;color:#484848;">G</div>
<div class="t" style="left:601.68px;top:102.50px;font-size:8.50px;color:#484848;">H</div>
<div class="t" style="left:630.94px;top:102.50px;font-size:8.50px;color:#484848;">I</div>
<div class="t" style="left:671.25px;top:102.50px;font-size:8.50px;color:#484848;">J</div>
<div class="t" style="left:711.79px;top:102.50px;font-size:8.50px;color:#484848;">K</div>
<div class="t" style="left:753.51px;top:102.50px;font-size:8.50px;color:#484848;">L</div>
<div class="t" style="left:793.58px;top:102.50px;font-size:8.50px;color:#484848;">M</div>
<div class="t" style="left:835.30px;top:102.50px;font-size:8.50px;color:#484848;">N</div>
<div class="t" style="left:876.32px;top:102.50px;font-size:8.50px;color:#484848;">O</div>
<div class="t" style="left:918.04px;top:102.50px;font-size:8.50px;color:#484848;">P</div>
<div class="t" style="left:958.82px;top:102.50px;font-size:8.50px;color:#484848;">Q</div>
<div class="t" style="left:1000.30px;top:102.50px;font-size:8.50px;color:#484848;">R</div>
<div class="t" style="left:1041.79px;top:102.50px;font-size:8.50px;color:#484848;">S</div>
<div class="t" style="left:1083.28px;top:102.50px;font-size:8.50px;color:#484848;">T</div>
<div class="t" style="left:1124.05px;top:102.50px;font-size:8.50px;color:#484848;">U</div>
<div class="r" style="left:0.00px;top:113.50px;width:22.00px;height:518.50px;background:#e7e6e5;"></div>
<div class="r" style="left:21.00px;top:100.00px;width:1.00px;height:532.00px;background:#c4c3c2;"></div>
<div class="r" style="left:0.00px;top:113.50px;width:21.00px;height:7.50px;background:#3d8de0;"></div>
<div class="r" style="left:0.00px;top:120.50px;width:21.00px;height:1.00px;background:#c8c7c6;"></div>
<div class="r" style="left:0.00px;top:121.00px;width:21.00px;height:41.50px;background:#e7e6e5;"></div>
<div class="r" style="left:0.00px;top:162.00px;width:21.00px;height:1.00px;background:#c8c7c6;"></div>
<div class="r" style="left:0.00px;top:162.50px;width:21.00px;height:27.00px;background:#e7e6e5;"></div>
<div class="r" style="left:0.00px;top:189.00px;width:21.00px;height:1.00px;background:#c8c7c6;"></div>
<div class="r" style="left:0.00px;top:189.50px;width:21.00px;height:7.00px;background:#e7e6e5;"></div>
<div class="r" style="left:0.00px;top:196.00px;width:21.00px;height:1.00px;background:#c8c7c6;"></div>
<div class="r" style="left:0.00px;top:196.50px;width:21.00px;height:26.00px;background:#e7e6e5;"></div>
<div class="r" style="left:0.00px;top:222.00px;width:21.00px;height:1.00px;background:#c8c7c6;"></div>
<div class="r" style="left:0.00px;top:222.50px;width:21.00px;height:26.00px;background:#e7e6e5;"></div>
<div class="r" style="left:0.00px;top:248.00px;width:21.00px;height:1.00px;background:#c8c7c6;"></div>
<div class="r" style="left:0.00px;top:248.50px;width:21.00px;height:20.00px;background:#e7e6e5;"></div>
<div class="r" style="left:0.00px;top:268.00px;width:21.00px;height:1.00px;background:#c8c7c6;"></div>
<div class="r" style="left:0.00px;top:268.50px;width:21.00px;height:20.00px;background:#e7e6e5;"></div>
<div class="r" style="left:0.00px;top:288.00px;width:21.00px;height:1.00px;background:#c8c7c6;"></div>
<div class="r" style="left:0.00px;top:288.50px;width:21.00px;height:20.00px;background:#e7e6e5;"></div>
<div class="r" style="left:0.00px;top:308.00px;width:21.00px;height:1.00px;background:#c8c7c6;"></div>
<div class="r" style="left:0.00px;top:308.50px;width:21.00px;height:20.00px;background:#e7e6e5;"></div>
<div class="r" style="left:0.00px;top:328.00px;width:21.00px;height:1.00px;background:#c8c7c6;"></div>
<div class="r" style="left:0.00px;top:328.50px;width:21.00px;height:20.00px;background:#e7e6e5;"></div>
<div class="r" style="left:0.00px;top:348.00px;width:21.00px;height:1.00px;background:#c8c7c6;"></div>
<div class="r" style="left:0.00px;top:348.50px;width:21.00px;height:7.00px;background:#e7e6e5;"></div>
<div class="r" style="left:0.00px;top:355.00px;width:21.00px;height:1.00px;background:#c8c7c6;"></div>
<div class="r" style="left:0.00px;top:355.50px;width:21.00px;height:6.50px;background:#e7e6e5;"></div>
<div class="r" style="left:0.00px;top:361.50px;width:21.00px;height:1.00px;background:#c8c7c6;"></div>
<div class="r" style="left:0.00px;top:362.00px;width:21.00px;height:13.50px;background:#e7e6e5;"></div>
<div class="r" style="left:0.00px;top:375.00px;width:21.00px;height:1.00px;background:#c8c7c6;"></div>
<div class="r" style="left:0.00px;top:375.50px;width:21.00px;height:14.00px;background:#e7e6e5;"></div>
<div class="r" style="left:0.00px;top:389.00px;width:21.00px;height:1.00px;background:#c8c7c6;"></div>
<div class="r" style="left:0.00px;top:389.50px;width:21.00px;height:20.00px;background:#e7e6e5;"></div>
<div class="r" style="left:0.00px;top:409.00px;width:21.00px;height:1.00px;background:#c8c7c6;"></div>
<div class="r" style="left:0.00px;top:409.50px;width:21.00px;height:20.00px;background:#e7e6e5;"></div>
<div class="r" style="left:0.00px;top:429.00px;width:21.00px;height:1.00px;background:#c8c7c6;"></div>
<div class="r" style="left:0.00px;top:429.50px;width:21.00px;height:20.00px;background:#e7e6e5;"></div>
<div class="r" style="left:0.00px;top:449.00px;width:21.00px;height:1.00px;background:#c8c7c6;"></div>
<div class="r" style="left:0.00px;top:449.50px;width:21.00px;height:20.00px;background:#e7e6e5;"></div>
<div class="r" style="left:0.00px;top:469.00px;width:21.00px;height:1.00px;background:#c8c7c6;"></div>
<div class="r" style="left:0.00px;top:469.50px;width:21.00px;height:20.00px;background:#e7e6e5;"></div>
<div class="r" style="left:0.00px;top:489.00px;width:21.00px;height:1.00px;background:#c8c7c6;"></div>
<div class="r" style="left:0.00px;top:489.50px;width:21.00px;height:20.00px;background:#e7e6e5;"></div>
<div class="r" style="left:0.00px;top:509.00px;width:21.00px;height:1.00px;background:#c8c7c6;"></div>
<div class="r" style="left:0.00px;top:509.50px;width:21.00px;height:20.00px;background:#e7e6e5;"></div>
<div class="r" style="left:0.00px;top:529.00px;width:21.00px;height:1.00px;background:#c8c7c6;"></div>
<div class="r" style="left:0.00px;top:529.50px;width:21.00px;height:20.00px;background:#e7e6e5;"></div>
<div class="r" style="left:0.00px;top:549.00px;width:21.00px;height:1.00px;background:#c8c7c6;"></div>
<div class="r" style="left:0.00px;top:549.50px;width:21.00px;height:14.00px;background:#e7e6e5;"></div>
<div class="r" style="left:0.00px;top:563.00px;width:21.00px;height:1.00px;background:#c8c7c6;"></div>
<div class="r" style="left:0.00px;top:563.50px;width:21.00px;height:6.50px;background:#e7e6e5;"></div>
<div class="r" style="left:0.00px;top:569.50px;width:21.00px;height:1.00px;background:#c8c7c6;"></div>
<div class="r" style="left:0.00px;top:570.00px;width:21.00px;height:33.00px;background:#e7e6e5;"></div>
<div class="r" style="left:0.00px;top:602.50px;width:21.00px;height:1.00px;background:#c8c7c6;"></div>
<div class="r" style="left:0.00px;top:603.00px;width:21.00px;height:29.00px;background:#e7e6e5;"></div>
<div class="r" style="left:0.00px;top:631.50px;width:21.00px;height:1.00px;background:#c8c7c6;"></div>
<div class="t" style="left:8.84px;top:113.99px;font-size:6.86px;color:#fff;">1</div>
<div class="t" style="left:8.31px;top:137.50px;font-size:8.78px;color:#505050;">2</div>
<div class="t" style="left:8.31px;top:171.75px;font-size:8.78px;color:#505050;">3</div>
<div class="t" style="left:8.58px;top:188.52px;font-size:7.82px;color:#505050;">4</div>
<div class="t" style="left:8.31px;top:205.25px;font-size:8.78px;color:#505050;">5</div>
<div class="t" style="left:8.31px;top:231.25px;font-size:8.78px;color:#505050;">6</div>
<div class="t" style="left:8.31px;top:254.25px;font-size:8.78px;color:#505050;">7</div>
<div class="t" style="left:8.31px;top:274.25px;font-size:8.78px;color:#505050;">8</div>
<div class="t" style="left:8.31px;top:294.25px;font-size:8.78px;color:#505050;">9</div>
<div class="t" style="left:5.87px;top:314.25px;font-size:8.78px;color:#505050;">10</div>
<div class="t" style="left:6.19px;top:334.25px;font-size:8.78px;color:#505050;">11</div>
<div class="t" style="left:6.40px;top:347.52px;font-size:7.82px;color:#505050;">12</div>
<div class="t" style="left:6.78px;top:354.64px;font-size:7.13px;color:#505050;">13</div>
<div class="t" style="left:5.87px;top:364.50px;font-size:8.78px;color:#505050;">14</div>
<div class="t" style="left:5.87px;top:378.25px;font-size:8.78px;color:#505050;">15</div>
<div class="t" style="left:5.87px;top:395.25px;font-size:8.78px;color:#505050;">16</div>
<div class="t" style="left:5.87px;top:415.25px;font-size:8.78px;color:#505050;">17</div>
<div class="t" style="left:5.87px;top:435.25px;font-size:8.78px;color:#505050;">18</div>
<div class="t" style="left:5.87px;top:455.25px;font-size:8.78px;color:#505050;">19</div>
<div class="t" style="left:5.87px;top:475.25px;font-size:8.78px;color:#505050;">20</div>
<div class="t" style="left:5.87px;top:495.25px;font-size:8.78px;color:#505050;">21</div>
<div class="t" style="left:5.87px;top:515.25px;font-size:8.78px;color:#505050;">22</div>
<div class="t" style="left:5.87px;top:535.25px;font-size:8.78px;color:#505050;">23</div>
<div class="t" style="left:5.87px;top:552.25px;font-size:8.78px;color:#505050;">24</div>
<div class="t" style="left:6.78px;top:562.64px;font-size:7.13px;color:#505050;">25</div>
<div class="t" style="left:5.87px;top:582.25px;font-size:8.78px;color:#505050;">26</div>
<div class="t" style="left:5.87px;top:613.25px;font-size:8.78px;color:#505050;">27</div>
<div class="r" style="left:22.00px;top:121.00px;width:590.00px;height:41.50px;background:#1e3a8a;"></div>
<div class="r" style="left:35.50px;top:133.70px;width:9.50px;height:11.30px;background:none;border:1px solid #fff;"></div>
<div class="t" style="left:38.00px;top:134.07px;font-size:10.97px;color:#fff;font-weight:bold;transform:scaleX(0.6713);">?</div>
<div class="t" style="left:54.50px;top:130.85px;font-size:16.19px;color:#fff;font-weight:bold;transform:scaleX(0.8949);">MODÈLE SEUIL DE RENTABILITÉ<svg style="position:absolute;left:0.00px;top:14.35px;overflow:visible" width="69.23" height="2.5"><path d="M0 1 L1.44 0 L2.88 2 L4.33 0 L5.77 2 L7.21 0 L8.65 2 L10.10 0 L11.54 2 L12.98 0 L14.42 2 L15.87 0 L17.31 2 L18.75 0 L20.19 2 L21.63 0 L23.08 2 L24.52 0 L25.96 2 L27.40 0 L28.85 2 L30.29 0 L31.73 2 L33.17 0 L34.62 2 L36.06 0 L37.50 2 L38.94 0 L40.38 2 L41.83 0 L43.27 2 L44.71 0 L46.15 2 L47.60 0 L49.04 2 L50.48 0 L51.92 2 L53.37 0 L54.81 2 L56.25 0 L57.69 2 L59.13 0 L60.58 2 L62.02 0 L63.46 2 L64.90 0 L66.35 2 L67.79 0 L69.23 2" stroke="#d43344" stroke-width="0.85" fill="none"/></svg><svg style="position:absolute;left:152.56px;top:14.35px;overflow:visible" width="105.79" height="2.5"><path d="M0 1 L1.45 0 L2.90 2 L4.35 0 L5.80 2 L7.25 0 L8.69 2 L10.14 0 L11.59 2 L13.04 0 L14.49 2 L15.94 0 L17.39 2 L18.84 0 L20.29 2 L21.74 0 L23.19 2 L24.64 0 L26.08 2 L27.53 0 L28.98 2 L30.43 0 L31.88 2 L33.33 0 L34.78 2 L36.23 0 L37.68 2 L39.13 0 L40.58 2 L42.03 0 L43.47 2 L44.92 0 L46.37 2 L47.82 0 L49.27 2 L50.72 0 L52.17 2 L53.62 0 L55.07 2 L56.52 0 L57.97 2 L59.42 0 L60.86 2 L62.31 0 L63.76 2 L65.21 0 L66.66 2 L68.11 0 L69.56 2 L71.01 0 L72.46 2 L73.91 0 L75.36 2 L76.81 0 L78.25 2 L79.70 0 L81.15 2 L82.60 0 L84.05 2 L85.50 0 L86.95 2 L88.40 0 L89.85 2 L91.30 0 L92.75 2 L94.20 0 L95.64 2 L97.09 0 L98.54 2 L99.99 0 L101.44 2 L102.89 0 L104.34 2 L105.79 0" stroke="#d43344" stroke-width="0.85" fill="none"/></svg></div>
<div class="r" style="left:36.00px;top:162.50px;width:562.00px;height:27.00px;background:#1e3a8a;"></div>
<div class="t" style="left:36.30px;top:169.81px;font-size:9.60px;color:#a9c2ee;font-style:italic;transform:scaleX(0.9687);">Analyse du point mort — Mis à jour le 03/03/2026<svg style="position:absolute;left:0.00px;top:8.39px;overflow:visible" width="34.16" height="2.5"><path d="M0 1 L1.37 0 L2.73 2 L4.10 0 L5.46 2 L6.83 0 L8.20 2 L9.56 0 L10.93 2 L12.30 0 L13.66 2 L15.03 0 L16.39 2 L17.76 0 L19.13 2 L20.49 0 L21.86 2 L23.23 0 L24.59 2 L25.96 0 L27.32 2 L28.69 0 L30.06 2 L31.42 0 L32.79 2 L34.16 0" stroke="#d43344" stroke-width="0.85" fill="none"/></svg><svg style="position:absolute;left:36.82px;top:8.39px;overflow:visible" width="10.68" height="2.5"><path d="M0 1 L1.33 0 L2.67 2 L4.00 0 L5.34 2 L6.67 0 L8.01 2 L9.34 0 L10.68 2" stroke="#d43344" stroke-width="0.85" fill="none"/></svg><svg style="position:absolute;left:73.66px;top:8.39px;overflow:visible" width="19.21" height="2.5"><path d="M0 1 L1.37 0 L2.74 2 L4.12 0 L5.49 2 L6.86 0 L8.23 2 L9.60 0 L10.98 2 L12.35 0 L13.72 2 L15.09 0 L16.46 2 L17.84 0 L19.21 2" stroke="#d43344" stroke-width="0.85" fill="none"/></svg><svg style="position:absolute;left:107.80px;top:8.39px;overflow:visible" width="14.93" height="2.5"><path d="M0 1 L1.36 0 L2.72 2 L4.07 0 L5.43 2 L6.79 0 L8.15 2 L9.50 0 L10.86 2 L12.22 0 L13.58 2 L14.93 0" stroke="#d43344" stroke-width="0.85" fill="none"/></svg><svg style="position:absolute;left:133.41px;top:8.39px;overflow:visible" width="16.01" height="2.5"><path d="M0 1 L1.33 0 L2.67 2 L4.00 0 L5.34 2 L6.67 0 L8.01 2 L9.34 0 L10.67 2 L12.01 0 L13.34 2 L14.68 0 L16.01 2" stroke="#d43344" stroke-width="0.85" fill="none"/></svg><svg style="position:absolute;left:152.09px;top:8.39px;overflow:visible" width="7.47" height="2.5"><path d="M0 1 L1.25 0 L2.49 2 L3.74 0 L4.98 2 L6.23 0 L7.47 2" stroke="#d43344" stroke-width="0.85" fill="none"/></svg></div>
<div class="r" style="left:36.00px;top:197.50px;width:562.00px;height:23.00px;background:#2563eb;"></div>
<div class="t" style="left:41.00px;top:203.57px;font-size:10.43px;color:#fff;font-weight:bold;transform:scaleX(0.8495);">A — PARAMÈTRES DE BASE  (cellules jaunes = saisie)<svg style="position:absolute;left:23.35px;top:9.13px;overflow:visible" width="72.20" height="2.5"><path d="M0 1 L1.54 0 L3.07 2 L4.61 0 L6.14 2 L7.68 0 L9.22 2 L10.75 0 L12.29 2 L13.82 0 L15.36 2 L16.90 0 L18.43 2 L19.97 0 L21.50 2 L23.04 0 L24.58 2 L26.11 0 L27.65 2 L29.19 0 L30.72 2 L32.26 0 L33.79 2 L35.33 0 L36.87 2 L38.40 0 L39.94 2 L41.47 0 L43.01 2 L44.55 0 L46.08 2 L47.62 0 L49.15 2 L50.69 0 L52.23 2 L53.76 0 L55.30 2 L56.83 0 L58.37 2 L59.91 0 L61.44 2 L62.98 0 L64.51 2 L66.05 0 L67.59 2 L69.12 0 L70.66 2 L72.20 0" stroke="#d43344" stroke-width="0.85" fill="none"/></svg><svg style="position:absolute;left:154.04px;top:9.13px;overflow:visible" width="38.24" height="2.5"><path d="M0 1 L1.53 0 L3.06 2 L4.59 0 L6.12 2 L7.65 0 L9.18 2 L10.71 0 L12.24 2 L13.77 0 L15.30 2 L16.82 0 L18.35 2 L19.88 0 L21.41 2 L22.94 0 L24.47 2 L26.00 0 L27.53 2 L29.06 0 L30.59 2 L32.12 0 L33.65 2 L35.18 0 L36.71 2 L38.24 0" stroke="#d43344" stroke-width="0.85" fill="none"/></svg><svg style="position:absolute;left:195.17px;top:9.13px;overflow:visible" width="33.02" height="2.5"><path d="M0 1 L1.50 0 L3.00 2 L4.50 0 L6.00 2 L7.50 0 L9.01 2 L10.51 0 L12.01 2 L13.51 0 L15.01 2 L16.51 0 L18.01 2 L19.51 0 L21.01 2 L22.51 0 L24.01 2 L25.52 0 L27.02 2 L28.52 0 L30.02 2 L31.52 0 L33.02 2" stroke="#d43344" stroke-width="0.85" fill="none"/></svg><svg style="position:absolute;left:240.06px;top:9.13px;overflow:visible" width="28.98" height="2.5"><path d="M0 1 L1.53 0 L3.05 2 L4.58 0 L6.10 2 L7.63 0 L9.15 2 L10.68 0 L12.20 2 L13.73 0 L15.25 2 L16.78 0 L18.30 2 L19.83 0 L21.35 2 L22.88 0 L24.40 2 L25.93 0 L27.45 2 L28.98 0" stroke="#d43344" stroke-width="0.85" fill="none"/></svg></div>
<div class="r" style="left:36.00px;top:223.00px;width:390.50px;height:25.50px;background:#3b82f6;"></div>
<div class="r" style="left:169.00px;top:223.00px;width:1.00px;height:25.50px;background:#a8c8f8;"></div>
<div class="r" style="left:254.50px;top:223.00px;width:1.00px;height:25.50px;background:#a8c8f8;"></div>
<div class="r" style="left:340.00px;top:223.00px;width:1.00px;height:25.50px;background:#a8c8f8;"></div>
<div class="t" style="left:80.75px;top:230.23px;font-size:8.92px;color:#fff;font-weight:bold;transform:scaleX(0.9861);">Paramètre<svg style="position:absolute;left:0.00px;top:7.77px;overflow:visible" width="43.61" height="2.5"><path d="M0 1 L1.32 0 L2.64 2 L3.96 0 L5.29 2 L6.61 0 L7.93 2 L9.25 0 L10.57 2 L11.89 0 L13.21 2 L14.54 0 L15.86 2 L17.18 0 L18.50 2 L19.82 0 L21.14 2 L22.46 0 L23.78 2 L25.11 0 L26.43 2 L27.75 0 L29.07 2 L30.39 0 L31.71 2 L33.03 0 L34.36 2 L35.68 0 L37.00 2 L38.32 0 L39.64 2 L40.96 0 L42.28 2 L43.61 0" stroke="#d43344" stroke-width="0.85" fill="none"/></svg></div>
<div class="t" style="left:198.75px;top:230.23px;font-size:8.92px;color:#fff;font-weight:bold;transform:scaleX(0.9810);">Valeur<svg style="position:absolute;left:0.00px;top:7.77px;overflow:visible" width="26.76" height="2.5"><path d="M0 1 L1.34 0 L2.68 2 L4.01 0 L5.35 2 L6.69 0 L8.03 2 L9.37 0 L10.70 2 L12.04 0 L13.38 2 L14.72 0 L16.05 2 L17.39 0 L18.73 2 L20.07 0 L21.41 2 L22.74 0 L24.08 2 L25.42 0 L26.76 2" stroke="#d43344" stroke-width="0.85" fill="none"/></svg></div>
<div class="t" style="left:286.75px;top:230.23px;font-size:8.92px;color:#fff;font-weight:bold;transform:scaleX(1.0209);">Unité<svg style="position:absolute;left:0.00px;top:7.77px;overflow:visible" width="22.29" height="2.5"><path d="M0 1 L1.24 0 L2.48 2 L3.71 0 L4.95 2 L6.19 0 L7.43 2 L8.67 0 L9.90 2 L11.14 0 L12.38 2 L13.62 0 L14.86 2 L16.09 0 L17.33 2 L18.57 0 L19.81 2 L21.05 0 L22.29 2" stroke="#d43344" stroke-width="0.85" fill="none"/></svg></div>
<div class="t" style="left:360.00px;top:229.51px;font-size:9.60px;color:#fff;font-weight:bold;transform:scaleX(0.8842);">Description</div>
<div class="r" style="left:36.00px;top:248.50px;width:133.50px;height:20.00px;background:#f3f4f6;"></div>
<div class="r" style="left:169.50px;top:248.50px;width:85.50px;height:20.00px;background:#fff8e6;"></div>
<div class="r" style="left:255.00px;top:248.50px;width:171.50px;height:20.00px;background:#fff;"></div>
<div class="r" style="left:36.00px;top:268.50px;width:133.50px;height:20.00px;background:#f3f4f6;"></div>
<div class="r" style="left:169.50px;top:268.50px;width:85.50px;height:20.00px;background:#fff8e6;"></div>
<div class="r" style="left:255.00px;top:268.50px;width:171.50px;height:20.00px;background:#fff;"></div>
<div class="r" style="left:36.00px;top:288.50px;width:133.50px;height:20.00px;background:#f3f4f6;"></div>
<div class="r" style="left:169.50px;top:288.50px;width:85.50px;height:20.00px;background:#fff8e6;"></div>
<div class="r" style="left:255.00px;top:288.50px;width:171.50px;height:20.00px;background:#fff;"></div>
<div class="r" style="left:36.00px;top:308.50px;width:133.50px;height:20.00px;background:#f3f4f6;"></div>
<div class="r" style="left:169.50px;top:308.50px;width:85.50px;height:20.00px;background:#fff8e6;"></div>
<div class="r" style="left:255.00px;top:308.50px;width:171.50px;height:20.00px;background:#fff;"></div>
<div class="r" style="left:36.00px;top:328.50px;width:133.50px;height:20.00px;background:#f3f4f6;"></div>
<div class="r" style="left:169.50px;top:328.50px;width:85.50px;height:20.00px;background:#fff8e6;"></div>
<div class="r" style="left:255.00px;top:328.50px;width:171.50px;height:20.00px;background:#fff;"></div>
<div class="r" style="left:35.00px;top:268.00px;width:391.50px;height:1.00px;background:#dcdde0;"></div>
<div class="r" style="left:35.00px;top:248.50px;width:1.00px;height:20.00px;background:#dcdde0;"></div>
<div class="r" style="left:340.00px;top:248.50px;width:1.00px;height:20.00px;background:#dcdde0;"></div>
<div class="r" style="left:426.00px;top:248.50px;width:1.00px;height:20.00px;background:#dcdde0;"></div>
<div class="r" style="left:35.00px;top:288.00px;width:391.50px;height:1.00px;background:#dcdde0;"></div>
<div class="r" style="left:35.00px;top:268.50px;width:1.00px;height:20.00px;background:#dcdde0;"></div>
<div class="r" style="left:340.00px;top:268.50px;width:1.00px;height:20.00px;background:#dcdde0;"></div>
<div class="r" style="left:426.00px;top:268.50px;width:1.00px;height:20.00px;background:#dcdde0;"></div>
<div class="r" style="left:35.00px;top:308.00px;width:391.50px;height:1.00px;background:#dcdde0;"></div>
<div class="r" style="left:35.00px;top:288.50px;width:1.00px;height:20.00px;background:#dcdde0;"></div>
<div class="r" style="left:340.00px;top:288.50px;width:1.00px;height:20.00px;background:#dcdde0;"></div>
<div class="r" style="left:426.00px;top:288.50px;width:1.00px;height:20.00px;background:#dcdde0;"></div>
<div class="r" style="left:35.00px;top:328.00px;width:391.50px;height:1.00px;background:#dcdde0;"></div>
<div class="r" style="left:35.00px;top:308.50px;width:1.00px;height:20.00px;background:#dcdde0;"></div>
<div class="r" style="left:340.00px;top:308.50px;width:1.00px;height:20.00px;background:#dcdde0;"></div>
<div class="r" style="left:426.00px;top:308.50px;width:1.00px;height:20.00px;background:#dcdde0;"></div>
<div class="r" style="left:35.00px;top:348.00px;width:391.50px;height:1.00px;background:#dcdde0;"></div>
<div class="r" style="left:35.00px;top:328.50px;width:1.00px;height:20.00px;background:#dcdde0;"></div>
<div class="r" style="left:340.00px;top:328.50px;width:1.00px;height:20.00px;background:#dcdde0;"></div>
<div class="r" style="left:426.00px;top:328.50px;width:1.00px;height:20.00px;background:#dcdde0;"></div>
<div class="r" style="left:169.50px;top:248.00px;width:86.00px;height:1.30px;background:#f2b04a;"></div>
<div class="r" style="left:169.50px;top:268.00px;width:86.00px;height:1.30px;background:#f2b04a;"></div>
<div class="r" style="left:169.50px;top:288.00px;width:86.00px;height:1.30px;background:#f2b04a;"></div>
<div class="r" style="left:169.50px;top:308.00px;width:86.00px;height:1.30px;background:#f2b04a;"></div>
<div class="r" style="left:169.50px;top:328.00px;width:86.00px;height:1.30px;background:#f2b04a;"></div>
<div class="r" style="left:169.50px;top:348.00px;width:86.00px;height:1.30px;background:#f2b04a;"></div>
<div class="r" style="left:169.00px;top:248.50px;width:1.50px;height:100.30px;background:#f0a93a;"></div>
<div class="r" style="left:254.50px;top:248.50px;width:1.50px;height:100.30px;background:#f0a93a;"></div>
<div class="t" style="left:36.70px;top:253.18px;font-size:8.64px;color:#2a2f3a;font-weight:bold;transform:scaleX(1.0217);">Prix de vente unitaire<svg style="position:absolute;left:0.00px;top:7.52px;overflow:visible" width="16.33" height="2.5"><path d="M0 1 L1.26 0 L2.51 2 L3.77 0 L5.03 2 L6.28 0 L7.54 2 L8.79 0 L10.05 2 L11.31 0 L12.56 2 L13.82 0 L15.08 2 L16.33 0" stroke="#d43344" stroke-width="0.85" fill="none"/></svg><svg style="position:absolute;left:31.22px;top:7.52px;overflow:visible" width="22.57" height="2.5"><path d="M0 1 L1.25 0 L2.51 2 L3.76 0 L5.02 2 L6.27 0 L7.52 2 L8.78 0 L10.03 2 L11.29 0 L12.54 2 L13.79 0 L15.05 2 L16.30 0 L17.55 2 L18.81 0 L20.06 2 L21.32 0 L22.57 2" stroke="#d43344" stroke-width="0.85" fill="none"/></svg><svg style="position:absolute;left:56.19px;top:7.52px;overflow:visible" width="31.21" height="2.5"><path d="M0 1 L1.25 0 L2.50 2 L3.75 0 L4.99 2 L6.24 0 L7.49 2 L8.74 0 L9.99 2 L11.24 0 L12.48 2 L13.73 0 L14.98 2 L16.23 0 L17.48 2 L18.73 0 L19.98 2 L21.22 0 L22.47 2 L23.72 0 L24.97 2 L26.22 0 L27.47 2 L28.71 0 L29.96 2 L31.21 0" stroke="#d43344" stroke-width="0.85" fill="none"/></svg></div>
<div class="t" style="left:231.50px;top:251.76px;font-size:9.88px;color:#2a2a2a;font-weight:bold;transform:scaleX(0.8943);">50.00</div>
<div class="t" style="left:256.50px;top:253.18px;font-size:8.64px;color:#888;font-style:italic;transform:scaleX(1.0928);">€ / unité<svg style="position:absolute;left:12.01px;top:7.52px;overflow:visible" width="18.73" height="2.5"><path d="M0 1 L1.17 0 L2.34 2 L3.51 0 L4.68 2 L5.85 0 L7.03 2 L8.20 0 L9.37 2 L10.54 0 L11.71 2 L12.88 0 L14.05 2 L15.22 0 L16.39 2 L17.56 0 L18.73 2" stroke="#d43344" stroke-width="0.85" fill="none"/></svg></div>
<div class="t" style="left:342.00px;top:253.18px;font-size:8.64px;color:#777;font-style:italic;transform:scaleX(1.0280);">Prix unitaire HT<svg style="position:absolute;left:0.00px;top:7.52px;overflow:visible" width="14.88" height="2.5"><path d="M0 1 L1.24 0 L2.48 2 L3.72 0 L4.96 2 L6.20 0 L7.44 2 L8.68 0 L9.92 2 L11.16 0 L12.40 2 L13.64 0 L14.88 2" stroke="#d43344" stroke-width="0.85" fill="none"/></svg><svg style="position:absolute;left:17.28px;top:7.52px;overflow:visible" width="28.34" height="2.5"><path d="M0 1 L1.29 0 L2.58 2 L3.86 0 L5.15 2 L6.44 0 L7.73 2 L9.02 0 L10.30 2 L11.59 0 L12.88 2 L14.17 0 L15.46 2 L16.74 0 L18.03 2 L19.32 0 L20.61 2 L21.90 0 L23.18 2 L24.47 0 L25.76 2 L27.05 0 L28.34 2" stroke="#d43344" stroke-width="0.85" fill="none"/></svg></div>
<div class="t" style="left:36.70px;top:273.18px;font-size:8.64px;color:#2a2f3a;font-weight:bold;transform:scaleX(1.0141);">Coût variable unitaire<svg style="position:absolute;left:0.00px;top:7.52px;overflow:visible" width="19.67" height="2.5"><path d="M0 1 L1.31 0 L2.62 2 L3.93 0 L5.25 2 L6.56 0 L7.87 2 L9.18 0 L10.49 2 L11.80 0 L13.11 2 L14.43 0 L15.74 2 L17.05 0 L18.36 2 L19.67 0" stroke="#d43344" stroke-width="0.85" fill="none"/></svg><svg style="position:absolute;left:57.14px;top:7.52px;overflow:visible" width="31.21" height="2.5"><path d="M0 1 L1.30 0 L2.60 2 L3.90 0 L5.20 2 L6.50 0 L7.80 2 L9.10 0 L10.40 2 L11.70 0 L13.00 2 L14.31 0 L15.61 2 L16.91 0 L18.21 2 L19.51 0 L20.81 2 L22.11 0 L23.41 2 L24.71 0 L26.01 2 L27.31 0 L28.61 2 L29.91 0 L31.21 2" stroke="#d43344" stroke-width="0.85" fill="none"/></svg></div>
<div class="t" style="left:231.50px;top:271.76px;font-size:9.88px;color:#2a2a2a;font-weight:bold;transform:scaleX(0.8943);">20.00</div>
<div class="t" style="left:256.50px;top:273.18px;font-size:8.64px;color:#888;font-style:italic;transform:scaleX(1.0928);">€ / unité<svg style="position:absolute;left:12.01px;top:7.52px;overflow:visible" width="18.73" height="2.5"><path d="M0 1 L1.17 0 L2.34 2 L3.51 0 L4.68 2 L5.85 0 L7.03 2 L8.20 0 L9.37 2 L10.54 0 L11.71 2 L12.88 0 L14.05 2 L15.22 0 L16.39 2 L17.56 0 L18.73 2" stroke="#d43344" stroke-width="0.85" fill="none"/></svg></div>
<div class="t" style="left:342.00px;top:273.18px;font-size:8.64px;color:#777;font-style:italic;transform:scaleX(1.0462);">Charge variable par unité<svg style="position:absolute;left:78.29px;top:7.52px;overflow:visible" width="18.73" height="2.5"><path d="M0 1 L1.25 0 L2.50 2 L3.75 0 L5.00 2 L6.24 0 L7.49 2 L8.74 0 L9.99 2 L11.24 0 L12.49 2 L13.74 0 L14.99 2 L16.24 0 L17.49 2 L18.73 0" stroke="#d43344" stroke-width="0.85" fill="none"/></svg></div>
<div class="t" style="left:36.70px;top:293.18px;font-size:8.64px;color:#2a2f3a;font-weight:bold;transform:scaleX(0.9710);">Charges fixes totales<svg style="position:absolute;left:59.07px;top:7.52px;overflow:visible" width="27.85" height="2.5"><path d="M0 1 L1.33 0 L2.65 2 L3.98 0 L5.31 2 L6.63 0 L7.96 2 L9.28 0 L10.61 2 L11.94 0 L13.26 2 L14.59 0 L15.92 2 L17.24 0 L18.57 2 L19.89 0 L21.22 2 L22.55 0 L23.87 2 L25.20 0 L26.53 2 L27.85 0" stroke="#d43344" stroke-width="0.85" fill="none"/></svg></div>
<div class="t" style="left:213.90px;top:291.76px;font-size:9.88px;color:#2a2a2a;font-weight:bold;transform:scaleX(0.9037);">15,000.00</div>
<div class="t" style="left:256.50px;top:293.18px;font-size:8.64px;color:#888;font-style:italic;transform:scaleX(1.0653);">€ / période<svg style="position:absolute;left:12.01px;top:7.52px;overflow:visible" width="28.82" height="2.5"><path d="M0 1 L1.20 0 L2.40 2 L3.60 0 L4.80 2 L6.00 0 L7.21 2 L8.41 0 L9.61 2 L10.81 0 L12.01 2 L13.21 0 L14.41 2 L15.61 0 L16.81 2 L18.01 0 L19.21 2 L20.41 0 L21.62 2 L22.82 0 L24.02 2 L25.22 0 L26.42 2 L27.62 0 L28.82 2" stroke="#d43344" stroke-width="0.85" fill="none"/></svg></div>
<div class="t" style="left:342.00px;top:293.18px;font-size:8.64px;color:#777;font-style:italic;transform:scaleX(1.0197);">Loyer, salaires, amortissements…<svg style="position:absolute;left:0.00px;top:7.52px;overflow:visible" width="21.61" height="2.5"><path d="M0 1 L1.27 0 L2.54 2 L3.81 0 L5.09 2 L6.36 0 L7.63 2 L8.90 0 L10.17 2 L11.44 0 L12.71 2 L13.99 0 L15.26 2 L16.53 0 L17.80 2 L19.07 0 L20.34 2 L21.61 0" stroke="#d43344" stroke-width="0.85" fill="none"/></svg><svg style="position:absolute;left:25.94px;top:7.52px;overflow:visible" width="29.77" height="2.5"><path d="M0 1 L1.29 0 L2.59 2 L3.88 0 L5.18 2 L6.47 0 L7.77 2 L9.06 0 L10.35 2 L11.65 0 L12.94 2 L14.24 0 L15.53 2 L16.83 0 L18.12 2 L19.41 0 L20.71 2 L22.00 0 L23.30 2 L24.59 0 L25.89 2 L27.18 0 L28.48 2 L29.77 0" stroke="#d43344" stroke-width="0.85" fill="none"/></svg><svg style="position:absolute;left:60.52px;top:7.52px;overflow:visible" width="60.98" height="2.5"><path d="M0 1 L1.27 0 L2.54 2 L3.81 0 L5.08 2 L6.35 0 L7.62 2 L8.89 0 L10.16 2 L11.43 0 L12.71 2 L13.98 0 L15.25 2 L16.52 0 L17.79 2 L19.06 0 L20.33 2 L21.60 0 L22.87 2 L24.14 0 L25.41 2 L26.68 0 L27.95 2 L29.22 0 L30.49 2 L31.76 0 L33.03 2 L34.30 0 L35.57 2 L36.84 0 L38.12 2 L39.39 0 L40.66 2 L41.93 0 L43.20 2 L44.47 0 L45.74 2 L47.01 0 L48.28 2 L49.55 0 L50.82 2 L52.09 0 L53.36 2 L54.63 0 L55.90 2 L57.17 0 L58.44 2 L59.71 0 L60.98 2" stroke="#d43344" stroke-width="0.85" fill="none"/></svg></div>
<div class="t" style="left:36.70px;top:313.18px;font-size:8.64px;color:#2a2f3a;font-weight:bold;transform:scaleX(0.9869);">Quantité prévisionnelle<svg style="position:absolute;left:0.00px;top:7.52px;overflow:visible" width="35.05" height="2.5"><path d="M0 1 L1.30 0 L2.60 2 L3.89 0 L5.19 2 L6.49 0 L7.79 2 L9.09 0 L10.38 2 L11.68 0 L12.98 2 L14.28 0 L15.58 2 L16.87 0 L18.17 2 L19.47 0 L20.77 2 L22.07 0 L23.36 2 L24.66 0 L25.96 2 L27.26 0 L28.56 2 L29.85 0 L31.15 2 L32.45 0 L33.75 2 L35.05 0" stroke="#d43344" stroke-width="0.85" fill="none"/></svg><svg style="position:absolute;left:37.45px;top:7.52px;overflow:visible" width="58.11" height="2.5"><path d="M0 1 L1.32 0 L2.64 2 L3.96 0 L5.28 2 L6.60 0 L7.92 2 L9.24 0 L10.56 2 L11.89 0 L13.21 2 L14.53 0 L15.85 2 L17.17 0 L18.49 2 L19.81 0 L21.13 2 L22.45 0 L23.77 2 L25.09 0 L26.41 2 L27.73 0 L29.05 2 L30.37 0 L31.69 2 L33.01 0 L34.34 2 L35.66 0 L36.98 2 L38.30 0 L39.62 2 L40.94 0 L42.26 2 L43.58 0 L44.90 2 L46.22 0 L47.54 2 L48.86 0 L50.18 2 L51.50 0 L52.82 2 L54.14 0 L55.46 2 L56.78 0 L58.11 2" stroke="#d43344" stroke-width="0.85" fill="none"/></svg></div>
<div class="t" style="left:232.00px;top:311.76px;font-size:9.88px;color:#2a2a2a;font-weight:bold;transform:scaleX(0.8741);">1,000</div>
<div class="t" style="left:256.50px;top:313.18px;font-size:8.64px;color:#888;font-style:italic;transform:scaleX(1.0193);">unités<svg style="position:absolute;left:0.00px;top:7.52px;overflow:visible" width="23.05" height="2.5"><path d="M0 1 L1.28 0 L2.56 2 L3.84 0 L5.12 2 L6.40 0 L7.68 2 L8.97 0 L10.25 2 L11.53 0 L12.81 2 L14.09 0 L15.37 2 L16.65 0 L17.93 2 L19.21 0 L20.49 2 L21.77 0 L23.05 2" stroke="#d43344" stroke-width="0.85" fill="none"/></svg></div>
<div class="t" style="left:342.00px;top:313.18px;font-size:8.64px;color:#777;font-style:italic;transform:scaleX(1.0392);">Volume de vente estimé<svg style="position:absolute;left:31.38px;top:7.52px;overflow:visible" width="9.61" height="2.5"><path d="M0 1 L1.20 0 L2.40 2 L3.60 0 L4.80 2 L6.01 0 L7.21 2 L8.41 0 L9.61 2" stroke="#d43344" stroke-width="0.85" fill="none"/></svg><svg style="position:absolute;left:43.39px;top:7.52px;overflow:visible" width="21.14" height="2.5"><path d="M0 1 L1.24 0 L2.49 2 L3.73 0 L4.97 2 L6.22 0 L7.46 2 L8.70 0 L9.95 2 L11.19 0 L12.43 2 L13.68 0 L14.92 2 L16.16 0 L17.41 2 L18.65 0 L19.89 2 L21.14 0" stroke="#d43344" stroke-width="0.85" fill="none"/></svg><svg style="position:absolute;left:66.93px;top:7.52px;overflow:visible" width="25.45" height="2.5"><path d="M0 1 L1.27 0 L2.54 2 L3.82 0 L5.09 2 L6.36 0 L7.63 2 L8.91 0 L10.18 2 L11.45 0 L12.72 2 L14.00 0 L15.27 2 L16.54 0 L17.81 2 L19.09 0 L20.36 2 L21.63 0 L22.90 2 L24.18 0 L25.45 2" stroke="#d43344" stroke-width="0.85" fill="none"/></svg></div>
<div class="t" style="left:36.70px;top:333.18px;font-size:8.64px;color:#2a2f3a;font-weight:bold;transform:scaleX(0.9854);">Taux de TVA<svg style="position:absolute;left:0.00px;top:7.52px;overflow:visible" width="19.52" height="2.5"><path d="M0 1 L1.30 0 L2.60 2 L3.90 0 L5.21 2 L6.51 0 L7.81 2 L9.11 0 L10.41 2 L11.71 0 L13.02 2 L14.32 0 L15.62 2 L16.92 0 L18.22 2 L19.52 0" stroke="#d43344" stroke-width="0.85" fill="none"/></svg><svg style="position:absolute;left:21.93px;top:7.52px;overflow:visible" width="10.08" height="2.5"><path d="M0 1 L1.26 0 L2.52 2 L3.78 0 L5.04 2 L6.30 0 L7.56 2 L8.82 0 L10.08 2" stroke="#d43344" stroke-width="0.85" fill="none"/></svg></div>
<div class="t" style="left:244.00px;top:331.76px;font-size:9.88px;color:#2a2a2a;font-weight:bold;transform:scaleX(0.8740);">20</div>
<div class="t" style="left:256.50px;top:333.18px;font-size:8.64px;color:#888;font-style:italic;transform:scaleX(0.9110);">%</div>
<div class="t" style="left:342.00px;top:333.18px;font-size:8.64px;color:#777;font-style:italic;transform:scaleX(1.0724);">Taux applicable (facultatif)<svg style="position:absolute;left:0.00px;top:7.52px;overflow:visible" width="18.41" height="2.5"><path d="M0 1 L1.23 0 L2.46 2 L3.68 0 L4.91 2 L6.14 0 L7.37 2 L8.59 0 L9.82 2 L11.05 0 L12.28 2 L13.50 0 L14.73 2 L15.96 0 L17.19 2 L18.41 0" stroke="#d43344" stroke-width="0.85" fill="none"/></svg><svg style="position:absolute;left:65.00px;top:7.52px;overflow:visible" width="32.18" height="2.5"><path d="M0 1 L1.19 0 L2.38 2 L3.58 0 L4.77 2 L5.96 0 L7.15 2 L8.34 0 L9.53 2 L10.73 0 L11.92 2 L13.11 0 L14.30 2 L15.49 0 L16.69 2 L17.88 0 L19.07 2 L20.26 0 L21.45 2 L22.64 0 L23.84 2 L25.03 0 L26.22 2 L27.41 0 L28.60 2 L29.80 0 L30.99 2 L32.18 0" stroke="#d43344" stroke-width="0.85" fill="none"/></svg></div>
<div class="r" style="left:36.00px;top:363.00px;width:562.00px;height:12.00px;background:#2563eb;"></div>
<div class="t" style="left:41.30px;top:363.13px;font-size:9.47px;color:#fff;font-weight:bold;transform:scaleX(0.9522);">B — INDICATEURS CLÉS  (calculés automatiquement)<svg style="position:absolute;left:21.56px;top:8.27px;overflow:visible" width="63.98" height="2.5"><path d="M0 1 L1.36 0 L2.72 2 L4.08 0 L5.44 2 L6.81 0 L8.17 2 L9.53 0 L10.89 2 L12.25 0 L13.61 2 L14.97 0 L16.33 2 L17.70 0 L19.06 2 L20.42 0 L21.78 2 L23.14 0 L24.50 2 L25.86 0 L27.22 2 L28.59 0 L29.95 2 L31.31 0 L32.67 2 L34.03 0 L35.39 2 L36.75 0 L38.11 2 L39.47 0 L40.84 2 L42.20 0 L43.56 2 L44.92 0 L46.28 2 L47.64 0 L49.00 2 L50.36 0 L51.73 2 L53.09 0 L54.45 2 L55.81 0 L57.17 2 L58.53 0 L59.89 2 L61.25 0 L62.62 2 L63.98 0" stroke="#d43344" stroke-width="0.85" fill="none"/></svg><svg style="position:absolute;left:88.16px;top:8.27px;overflow:visible" width="25.24" height="2.5"><path d="M0 1 L1.40 0 L2.80 2 L4.21 0 L5.61 2 L7.01 0 L8.41 2 L9.82 0 L11.22 2 L12.62 0 L14.02 2 L15.43 0 L16.83 2 L18.23 0 L19.63 2 L21.04 0 L22.44 2 L23.84 0 L25.24 2" stroke="#d43344" stroke-width="0.85" fill="none"/></svg><svg style="position:absolute;left:121.82px;top:8.27px;overflow:visible" width="37.37" height="2.5"><path d="M0 1 L1.38 0 L2.77 2 L4.15 0 L5.54 2 L6.92 0 L8.30 2 L9.69 0 L11.07 2 L12.46 0 L13.84 2 L15.22 0 L16.61 2 L17.99 0 L19.38 2 L20.76 0 L22.14 2 L23.53 0 L24.91 2 L26.30 0 L27.68 2 L29.06 0 L30.45 2 L31.83 0 L33.22 2 L34.60 0 L35.98 2 L37.37 0" stroke="#d43344" stroke-width="0.85" fill="none"/></svg><svg style="position:absolute;left:161.81px;top:8.27px;overflow:visible" width="78.88" height="2.5"><path d="M0 1 L1.36 0 L2.72 2 L4.08 0 L5.44 2 L6.80 0 L8.16 2 L9.52 0 L10.88 2 L12.24 0 L13.60 2 L14.96 0 L16.32 2 L17.68 0 L19.04 2 L20.40 0 L21.76 2 L23.12 0 L24.48 2 L25.84 0 L27.20 2 L28.56 0 L29.92 2 L31.28 0 L32.64 2 L34.00 0 L35.36 2 L36.72 0 L38.08 2 L39.44 0 L40.80 2 L42.16 0 L43.52 2 L44.88 0 L46.24 2 L47.60 0 L48.96 2 L50.32 0 L51.68 2 L53.04 0 L54.40 2 L55.76 0 L57.12 2 L58.48 0 L59.84 2 L61.20 0 L62.56 2 L63.92 0 L65.28 2 L66.64 0 L68.00 2 L69.36 0 L70.72 2 L72.08 0 L73.44 2 L74.80 0 L76.16 2 L77.52 0 L78.88 2" stroke="#d43344" stroke-width="0.85" fill="none"/></svg></div>
<div class="r" style="left:36.00px;top:376.00px;width:390.50px;height:13.50px;background:#1e3a8a;"></div>
<div class="r" style="left:169.00px;top:376.00px;width:1.00px;height:13.50px;background:#8aa0d0;"></div>
<div class="r" style="left:254.50px;top:376.00px;width:1.00px;height:13.50px;background:#8aa0d0;"></div>
<div class="r" style="left:340.00px;top:376.00px;width:1.00px;height:13.50px;background:#8aa0d0;"></div>
<div class="t" style="left:81.30px;top:377.08px;font-size:8.64px;color:#fff;font-weight:bold;transform:scaleX(1.0099);">Indicateur<svg style="position:absolute;left:0.00px;top:7.52px;overflow:visible" width="41.29" height="2.5"><path d="M0 1 L1.29 0 L2.58 2 L3.87 0 L5.16 2 L6.45 0 L7.74 2 L9.03 0 L10.32 2 L11.61 0 L12.90 2 L14.19 0 L15.48 2 L16.78 0 L18.07 2 L19.36 0 L20.65 2 L21.94 0 L23.23 2 L24.52 0 L25.81 2 L27.10 0 L28.39 2 L29.68 0 L30.97 2 L32.26 0 L33.55 2 L34.84 0 L36.13 2 L37.42 0 L38.71 2 L40.00 0 L41.29 2" stroke="#d43344" stroke-width="0.85" fill="none"/></svg></div>
<div class="t" style="left:194.70px;top:377.08px;font-size:8.64px;color:#fff;font-weight:bold;">Formule</div>
<div class="t" style="left:280.50px;top:377.08px;font-size:8.64px;color:#fff;font-weight:bold;">Résultat<svg style="position:absolute;left:0.00px;top:7.52px;overflow:visible" width="34.09" height="2.5"><path d="M0 1 L1.31 0 L2.62 2 L3.93 0 L5.24 2 L6.56 0 L7.87 2 L9.18 0 L10.49 2 L11.80 0 L13.11 2 L14.42 0 L15.73 2 L17.04 0 L18.36 2 L19.67 0 L20.98 2 L22.29 0 L23.60 2 L24.91 0 L26.22 2 L27.53 0 L28.85 2 L30.16 0 L31.47 2 L32.78 0 L34.09 2" stroke="#d43344" stroke-width="0.85" fill="none"/></svg></div>
<div class="t" style="left:354.70px;top:377.08px;font-size:8.64px;color:#fff;font-weight:bold;transform:scaleX(1.0289);">Interprétation<svg style="position:absolute;left:0.00px;top:7.52px;overflow:visible" width="55.69" height="2.5"><path d="M0 1 L1.27 0 L2.53 2 L3.80 0 L5.06 2 L6.33 0 L7.59 2 L8.86 0 L10.13 2 L11.39 0 L12.66 2 L13.92 0 L15.19 2 L16.45 0 L17.72 2 L18.99 0 L20.25 2 L21.52 0 L22.78 2 L24.05 0 L25.31 2 L26.58 0 L27.85 2 L29.11 0 L30.38 2 L31.64 0 L32.91 2 L34.17 0 L35.44 2 L36.71 0 L37.97 2 L39.24 0 L40.50 2 L41.77 0 L43.03 2 L44.30 0 L45.57 2 L46.83 0 L48.10 2 L49.36 0 L50.63 2 L51.89 0 L53.16 2 L54.43 0 L55.69 2" stroke="#d43344" stroke-width="0.85" fill="none"/></svg></div>
<div class="r" style="left:36.00px;top:389.50px;width:219.00px;height:20.00px;background:#f3f4f6;"></div>
<div class="r" style="left:255.00px;top:389.50px;width:85.50px;height:20.00px;background:#dbeafe;"></div>
<div class="r" style="left:340.50px;top:389.50px;width:86.00px;height:20.00px;background:#f3f4f6;"></div>
<div class="r" style="left:35.00px;top:409.00px;width:391.50px;height:1.00px;background:#d9dce1;"></div>
<div class="r" style="left:35.00px;top:389.50px;width:1.00px;height:20.00px;background:#d9dce1;"></div>
<div class="r" style="left:169.00px;top:389.50px;width:1.00px;height:20.00px;background:#d9dce1;"></div>
<div class="r" style="left:426.00px;top:389.50px;width:1.00px;height:20.00px;background:#d9dce1;"></div>
<div class="r" style="left:36.00px;top:409.50px;width:219.00px;height:20.00px;background:#fff;"></div>
<div class="r" style="left:255.00px;top:409.50px;width:85.50px;height:20.00px;background:#dbeafe;"></div>
<div class="r" style="left:340.50px;top:409.50px;width:86.00px;height:20.00px;background:#fff;"></div>
<div class="r" style="left:35.00px;top:429.00px;width:391.50px;height:1.00px;background:#d9dce1;"></div>
<div class="r" style="left:35.00px;top:409.50px;width:1.00px;height:20.00px;background:#d9dce1;"></div>
<div class="r" style="left:169.00px;top:409.50px;width:1.00px;height:20.00px;background:#d9dce1;"></div>
<div class="r" style="left:426.00px;top:409.50px;width:1.00px;height:20.00px;background:#d9dce1;"></div>
<div class="r" style="left:36.00px;top:429.50px;width:219.00px;height:20.00px;background:#f3f4f6;"></div>
<div class="r" style="left:255.00px;top:429.50px;width:85.50px;height:20.00px;background:#dbeafe;"></div>
<div class="r" style="left:340.50px;top:429.50px;width:86.00px;height:20.00px;background:#f3f4f6;"></div>
<div class="r" style="left:35.00px;top:449.00px;width:391.50px;height:1.00px;background:#d9dce1;"></div>
<div class="r" style="left:35.00px;top:429.50px;width:1.00px;height:20.00px;background:#d9dce1;"></div>
<div class="r" style="left:169.00px;top:429.50px;width:1.00px;height:20.00px;background:#d9dce1;"></div>
<div class="r" style="left:426.00px;top:429.50px;width:1.00px;height:20.00px;background:#d9dce1;"></div>
<div class="r" style="left:36.00px;top:449.50px;width:219.00px;height:20.00px;background:#fff;"></div>
<div class="r" style="left:255.00px;top:449.50px;width:85.50px;height:20.00px;background:#dbeafe;"></div>
<div class="r" style="left:340.50px;top:449.50px;width:86.00px;height:20.00px;background:#fff;"></div>
<div class="r" style="left:35.00px;top:469.00px;width:391.50px;height:1.00px;background:#d9dce1;"></div>
<div class="r" style="left:35.00px;top:449.50px;width:1.00px;height:20.00px;background:#d9dce1;"></div>
<div class="r" style="left:169.00px;top:449.50px;width:1.00px;height:20.00px;background:#d9dce1;"></div>
<div class="r" style="left:426.00px;top:449.50px;width:1.00px;height:20.00px;background:#d9dce1;"></div>
<div class="r" style="left:36.00px;top:469.50px;width:219.00px;height:20.00px;background:#f3f4f6;"></div>
<div class="r" style="left:255.00px;top:469.50px;width:85.50px;height:20.00px;background:#dbeafe;"></div>
<div class="r" style="left:340.50px;top:469.50px;width:86.00px;height:20.00px;background:#f3f4f6;"></div>
<div class="r" style="left:35.00px;top:489.00px;width:391.50px;height:1.00px;background:#d9dce1;"></div>
<div class="r" style="left:35.00px;top:469.50px;width:1.00px;height:20.00px;background:#d9dce1;"></div>
<div class="r" style="left:169.00px;top:469.50px;width:1.00px;height:20.00px;background:#d9dce1;"></div>
<div class="r" style="left:426.00px;top:469.50px;width:1.00px;height:20.00px;background:#d9dce1;"></div>
<div class="r" style="left:36.00px;top:489.50px;width:219.00px;height:20.00px;background:#fff;"></div>
<div class="r" style="left:255.00px;top:489.50px;width:85.50px;height:20.00px;background:#dbeafe;"></div>
<div class="r" style="left:340.50px;top:489.50px;width:86.00px;height:20.00px;background:#fff;"></div>
<div class="r" style="left:35.00px;top:509.00px;width:391.50px;height:1.00px;background:#d9dce1;"></div>
<div class="r" style="left:35.00px;top:489.50px;width:1.00px;height:20.00px;background:#d9dce1;"></div>
<div class="r" style="left:169.00px;top:489.50px;width:1.00px;height:20.00px;background:#d9dce1;"></div>
<div class="r" style="left:426.00px;top:489.50px;width:1.00px;height:20.00px;background:#d9dce1;"></div>
<div class="r" style="left:36.00px;top:509.50px;width:219.00px;height:20.00px;background:#f3f4f6;"></div>
<div class="r" style="left:255.00px;top:509.50px;width:85.50px;height:20.00px;background:#dbeafe;"></div>
<div class="r" style="left:340.50px;top:509.50px;width:86.00px;height:20.00px;background:#f3f4f6;"></div>
<div class="r" style="left:35.00px;top:529.00px;width:391.50px;height:1.00px;background:#d9dce1;"></div>
<div class="r" style="left:35.00px;top:509.50px;width:1.00px;height:20.00px;background:#d9dce1;"></div>
<div class="r" style="left:169.00px;top:509.50px;width:1.00px;height:20.00px;background:#d9dce1;"></div>
<div class="r" style="left:426.00px;top:509.50px;width:1.00px;height:20.00px;background:#d9dce1;"></div>
<div class="r" style="left:36.00px;top:529.50px;width:219.00px;height:20.00px;background:#fff;"></div>
<div class="r" style="left:255.00px;top:529.50px;width:85.50px;height:20.00px;background:#dbeafe;"></div>
<div class="r" style="left:340.50px;top:529.50px;width:86.00px;height:20.00px;background:#fff;"></div>
<div class="r" style="left:35.00px;top:549.00px;width:391.50px;height:1.00px;background:#d9dce1;"></div>
<div class="r" style="left:35.00px;top:529.50px;width:1.00px;height:20.00px;background:#d9dce1;"></div>
<div class="r" style="left:169.00px;top:529.50px;width:1.00px;height:20.00px;background:#d9dce1;"></div>
<div class="r" style="left:426.00px;top:529.50px;width:1.00px;height:20.00px;background:#d9dce1;"></div>
<div class="r" style="left:254.50px;top:409.00px;width:86.00px;height:1.00px;background:#6b93d0;"></div>
<div class="r" style="left:254.50px;top:429.00px;width:86.00px;height:1.00px;background:#6b93d0;"></div>
<div class="r" style="left:254.50px;top:449.00px;width:86.00px;height:1.00px;background:#6b93d0;"></div>
<div class="r" style="left:254.50px;top:469.00px;width:86.00px;height:1.00px;background:#6b93d0;"></div>
<div class="r" style="left:254.50px;top:489.00px;width:86.00px;height:1.00px;background:#6b93d0;"></div>
<div class="r" style="left:254.50px;top:509.00px;width:86.00px;height:1.00px;background:#6b93d0;"></div>
<div class="r" style="left:254.50px;top:529.00px;width:86.00px;height:1.00px;background:#6b93d0;"></div>
<div class="r" style="left:254.50px;top:549.00px;width:86.00px;height:1.00px;background:#6b93d0;"></div>
<div class="r" style="left:254.20px;top:389.50px;width:1.00px;height:160.50px;background:#8fb5ee;"></div>
<div class="r" style="left:340.00px;top:389.50px;width:1.00px;height:160.50px;background:#c9d5e8;"></div>
<div class="t" style="left:36.70px;top:394.18px;font-size:8.64px;color:#2a2f3a;font-weight:bold;transform:scaleX(1.0437);">Marge sur coût variable (unitai<svg style="position:absolute;left:27.85px;top:7.52px;overflow:visible" width="13.45" height="2.5"><path d="M0 1 L1.22 0 L2.44 2 L3.67 0 L4.89 2 L6.11 0 L7.33 2 L8.56 0 L9.78 2 L11.00 0 L12.22 2 L13.45 0" stroke="#d43344" stroke-width="0.85" fill="none"/></svg><svg style="position:absolute;left:43.70px;top:7.52px;overflow:visible" width="18.24" height="2.5"><path d="M0 1 L1.22 0 L2.43 2 L3.65 0 L4.86 2 L6.08 0 L7.30 2 L8.51 0 L9.73 2 L10.94 0 L12.16 2 L13.37 0 L14.59 2 L15.81 0 L17.02 2 L18.24 0" stroke="#d43344" stroke-width="0.85" fill="none"/></svg><svg style="position:absolute;left:102.29px;top:7.52px;overflow:visible" width="23.04" height="2.5"><path d="M0 1 L1.28 0 L2.56 2 L3.84 0 L5.12 2 L6.40 0 L7.68 2 L8.96 0 L10.24 2 L11.52 0 L12.80 2 L14.08 0 L15.36 2 L16.64 0 L17.92 2 L19.20 0 L20.48 2 L21.76 0 L23.04 2" stroke="#d43344" stroke-width="0.85" fill="none"/></svg></div>
<div class="t" style="left:170.50px;top:394.18px;font-size:8.64px;color:#888;font-style:italic;transform:scaleX(1.0896);">€ / unité<svg style="position:absolute;left:12.01px;top:7.52px;overflow:visible" width="18.73" height="2.5"><path d="M0 1 L1.17 0 L2.34 2 L3.51 0 L4.68 2 L5.85 0 L7.03 2 L8.20 0 L9.37 2 L10.54 0 L11.71 2 L12.88 0 L14.05 2 L15.22 0 L16.39 2 L17.56 0 L18.73 2" stroke="#d43344" stroke-width="0.85" fill="none"/></svg></div>
<div class="t" style="left:309.90px;top:393.43px;font-size:9.47px;color:#2f4b8c;font-weight:bold;transform:scaleX(0.9371);">30.00 €</div>
<div class="t" style="left:36.70px;top:414.18px;font-size:8.64px;color:#2a2f3a;font-weight:bold;transform:scaleX(0.9879);">Taux de marge sur coût variable<svg style="position:absolute;left:0.00px;top:7.52px;overflow:visible" width="19.52" height="2.5"><path d="M0 1 L1.30 0 L2.60 2 L3.90 0 L5.21 2 L6.51 0 L7.81 2 L9.11 0 L10.41 2 L11.71 0 L13.02 2 L14.32 0 L15.62 2 L16.92 0 L18.22 2 L19.52 0" stroke="#d43344" stroke-width="0.85" fill="none"/></svg><svg style="position:absolute;left:21.93px;top:7.52px;overflow:visible" width="10.08" height="2.5"><path d="M0 1 L1.26 0 L2.52 2 L3.78 0 L5.04 2 L6.30 0 L7.56 2 L8.82 0 L10.08 2" stroke="#d43344" stroke-width="0.85" fill="none"/></svg><svg style="position:absolute;left:62.75px;top:7.52px;overflow:visible" width="13.45" height="2.5"><path d="M0 1 L1.34 0 L2.69 2 L4.03 0 L5.38 2 L6.72 0 L8.07 2 L9.41 0 L10.76 2 L12.10 0 L13.45 2" stroke="#d43344" stroke-width="0.85" fill="none"/></svg><svg style="position:absolute;left:78.59px;top:7.52px;overflow:visible" width="18.24" height="2.5"><path d="M0 1 L1.30 0 L2.61 2 L3.91 0 L5.21 2 L6.51 0 L7.82 2 L9.12 0 L10.42 2 L11.72 0 L13.03 2 L14.33 0 L15.63 2 L16.94 0 L18.24 2" stroke="#d43344" stroke-width="0.85" fill="none"/></svg></div>
<div class="t" style="left:170.50px;top:414.18px;font-size:8.64px;color:#888;font-style:italic;transform:scaleX(0.8460);">%</div>
<div class="t" style="left:314.70px;top:413.43px;font-size:9.47px;color:#2f4b8c;font-weight:bold;transform:scaleX(0.9240);">60.0%</div>
<div class="t" style="left:36.70px;top:434.18px;font-size:8.64px;color:#2a2f3a;font-weight:bold;transform:scaleX(1.0228);">Seuil de rentabilité (quantité)<svg style="position:absolute;left:0.00px;top:7.52px;overflow:visible" width="20.65" height="2.5"><path d="M0 1 L1.29 0 L2.58 2 L3.87 0 L5.16 2 L6.45 0 L7.74 2 L9.03 0 L10.32 2 L11.61 0 L12.91 2 L14.20 0 L15.49 2 L16.78 0 L18.07 2 L19.36 0 L20.65 2" stroke="#d43344" stroke-width="0.85" fill="none"/></svg><svg style="position:absolute;left:23.05px;top:7.52px;overflow:visible" width="10.08" height="2.5"><path d="M0 1 L1.26 0 L2.52 2 L3.78 0 L5.04 2 L6.30 0 L7.56 2 L8.82 0 L10.08 2" stroke="#d43344" stroke-width="0.85" fill="none"/></svg><svg style="position:absolute;left:35.54px;top:7.52px;overflow:visible" width="41.30" height="2.5"><path d="M0 1 L1.29 0 L2.58 2 L3.87 0 L5.16 2 L6.45 0 L7.74 2 L9.03 0 L10.32 2 L11.61 0 L12.91 2 L14.20 0 L15.49 2 L16.78 0 L18.07 2 L19.36 0 L20.65 2 L21.94 0 L23.23 2 L24.52 0 L25.81 2 L27.10 0 L28.39 2 L29.68 0 L30.97 2 L32.26 0 L33.55 2 L34.84 0 L36.13 2 L37.43 0 L38.72 2 L40.01 0 L41.30 2" stroke="#d43344" stroke-width="0.85" fill="none"/></svg><svg style="position:absolute;left:82.11px;top:7.52px;overflow:visible" width="33.60" height="2.5"><path d="M0 1 L1.29 0 L2.58 2 L3.88 0 L5.17 2 L6.46 0 L7.75 2 L9.05 0 L10.34 2 L11.63 0 L12.92 2 L14.22 0 L15.51 2 L16.80 0 L18.09 2 L19.39 0 L20.68 2 L21.97 0 L23.26 2 L24.55 0 L25.85 2 L27.14 0 L28.43 2 L29.72 0 L31.02 2 L32.31 0 L33.60 2" stroke="#d43344" stroke-width="0.85" fill="none"/></svg></div>
<div class="t" style="left:170.50px;top:434.18px;font-size:8.64px;color:#888;font-style:italic;transform:scaleX(1.0497);">unités<svg style="position:absolute;left:0.00px;top:7.52px;overflow:visible" width="23.05" height="2.5"><path d="M0 1 L1.21 0 L2.43 2 L3.64 0 L4.85 2 L6.07 0 L7.28 2 L8.49 0 L9.71 2 L10.92 0 L12.13 2 L13.35 0 L14.56 2 L15.77 0 L16.99 2 L18.20 0 L19.41 2 L20.63 0 L21.84 2 L23.05 0" stroke="#d43344" stroke-width="0.85" fill="none"/></svg></div>
<div class="t" style="left:324.80px;top:433.43px;font-size:9.47px;color:#2f4b8c;font-weight:bold;transform:scaleX(0.9306);">500</div>
<div class="t" style="left:36.70px;top:454.18px;font-size:8.64px;color:#2a2f3a;font-weight:bold;">Seuil de rentabilité (CA)<svg style="position:absolute;left:0.00px;top:7.52px;overflow:visible" width="20.65" height="2.5"><path d="M0 1 L1.29 0 L2.58 2 L3.87 0 L5.16 2 L6.45 0 L7.74 2 L9.03 0 L10.32 2 L11.61 0 L12.91 2 L14.20 0 L15.49 2 L16.78 0 L18.07 2 L19.36 0 L20.65 2" stroke="#d43344" stroke-width="0.85" fill="none"/></svg><svg style="position:absolute;left:23.05px;top:7.52px;overflow:visible" width="10.08" height="2.5"><path d="M0 1 L1.26 0 L2.52 2 L3.78 0 L5.04 2 L6.30 0 L7.56 2 L8.82 0 L10.08 2" stroke="#d43344" stroke-width="0.85" fill="none"/></svg><svg style="position:absolute;left:35.54px;top:7.52px;overflow:visible" width="41.30" height="2.5"><path d="M0 1 L1.29 0 L2.58 2 L3.87 0 L5.16 2 L6.45 0 L7.74 2 L9.03 0 L10.32 2 L11.61 0 L12.91 2 L14.20 0 L15.49 2 L16.78 0 L18.07 2 L19.36 0 L20.65 2 L21.94 0 L23.23 2 L24.52 0 L25.81 2 L27.10 0 L28.39 2 L29.68 0 L30.97 2 L32.26 0 L33.55 2 L34.84 0 L36.13 2 L37.43 0 L38.72 2 L40.01 0 L41.30 2" stroke="#d43344" stroke-width="0.85" fill="none"/></svg></div>
<div class="t" style="left:170.50px;top:454.18px;font-size:8.64px;color:#888;font-style:italic;transform:scaleX(1.1447);">€</div>
<div class="t" style="left:292.00px;top:453.43px;font-size:9.47px;color:#2f4b8c;font-weight:bold;transform:scaleX(0.9498);">25,000.00 €</div>
<div class="t" style="left:36.70px;top:474.18px;font-size:8.64px;color:#2a2f3a;font-weight:bold;transform:scaleX(1.0114);">Marge de sécurité (unités)<svg style="position:absolute;left:27.85px;top:7.52px;overflow:visible" width="10.08" height="2.5"><path d="M0 1 L1.26 0 L2.52 2 L3.78 0 L5.04 2 L6.30 0 L7.56 2 L8.82 0 L10.08 2" stroke="#d43344" stroke-width="0.85" fill="none"/></svg><svg style="position:absolute;left:40.34px;top:7.52px;overflow:visible" width="33.14" height="2.5"><path d="M0 1 L1.27 0 L2.55 2 L3.82 0 L5.10 2 L6.37 0 L7.65 2 L8.92 0 L10.20 2 L11.47 0 L12.75 2 L14.02 0 L15.30 2 L16.57 0 L17.84 2 L19.12 0 L20.39 2 L21.67 0 L22.94 2 L24.22 0 L25.49 2 L26.77 0 L28.04 2 L29.32 0 L30.59 2 L31.87 0 L33.14 2" stroke="#d43344" stroke-width="0.85" fill="none"/></svg><svg style="position:absolute;left:78.76px;top:7.52px;overflow:visible" width="25.45" height="2.5"><path d="M0 1 L1.27 0 L2.54 2 L3.82 0 L5.09 2 L6.36 0 L7.63 2 L8.91 0 L10.18 2 L11.45 0 L12.72 2 L13.99 0 L15.27 2 L16.54 0 L17.81 2 L19.08 0 L20.36 2 L21.63 0 L22.90 2 L24.17 0 L25.45 2" stroke="#d43344" stroke-width="0.85" fill="none"/></svg></div>
<div class="t" style="left:170.50px;top:474.18px;font-size:8.64px;color:#888;font-style:italic;transform:scaleX(1.0497);">unités<svg style="position:absolute;left:0.00px;top:7.52px;overflow:visible" width="23.05" height="2.5"><path d="M0 1 L1.21 0 L2.43 2 L3.64 0 L4.85 2 L6.07 0 L7.28 2 L8.49 0 L9.71 2 L10.92 0 L12.13 2 L13.35 0 L14.56 2 L15.77 0 L16.99 2 L18.20 0 L19.41 2 L20.63 0 L21.84 2 L23.05 0" stroke="#d43344" stroke-width="0.85" fill="none"/></svg></div>
<div class="t" style="left:324.80px;top:473.43px;font-size:9.47px;color:#2f4b8c;font-weight:bold;transform:scaleX(0.9306);">500</div>
<div class="t" style="left:36.70px;top:494.18px;font-size:8.64px;color:#2a2f3a;font-weight:bold;transform:scaleX(1.0110);">Marge de sécurité (%)<svg style="position:absolute;left:27.85px;top:7.52px;overflow:visible" width="10.08" height="2.5"><path d="M0 1 L1.26 0 L2.52 2 L3.78 0 L5.04 2 L6.30 0 L7.56 2 L8.82 0 L10.08 2" stroke="#d43344" stroke-width="0.85" fill="none"/></svg><svg style="position:absolute;left:40.34px;top:7.52px;overflow:visible" width="33.14" height="2.5"><path d="M0 1 L1.27 0 L2.55 2 L3.82 0 L5.10 2 L6.37 0 L7.65 2 L8.92 0 L10.20 2 L11.47 0 L12.75 2 L14.02 0 L15.30 2 L16.57 0 L17.84 2 L19.12 0 L20.39 2 L21.67 0 L22.94 2 L24.22 0 L25.49 2 L26.77 0 L28.04 2 L29.32 0 L30.59 2 L31.87 0 L33.14 2" stroke="#d43344" stroke-width="0.85" fill="none"/></svg></div>
<div class="t" style="left:170.50px;top:494.18px;font-size:8.64px;color:#888;font-style:italic;transform:scaleX(0.8460);">%</div>
<div class="t" style="left:314.70px;top:493.43px;font-size:9.47px;color:#2f4b8c;font-weight:bold;transform:scaleX(0.9240);">50.0%</div>
<div class="t" style="left:36.70px;top:514.18px;font-size:8.64px;color:#2a2f3a;font-weight:bold;">Résultat prévisionnel<svg style="position:absolute;left:0.00px;top:7.52px;overflow:visible" width="34.09" height="2.5"><path d="M0 1 L1.31 0 L2.62 2 L3.93 0 L5.24 2 L6.56 0 L7.87 2 L9.18 0 L10.49 2 L11.80 0 L13.11 2 L14.42 0 L15.73 2 L17.04 0 L18.36 2 L19.67 0 L20.98 2 L22.29 0 L23.60 2 L24.91 0 L26.22 2 L27.53 0 L28.85 2 L30.16 0 L31.47 2 L32.78 0 L34.09 2" stroke="#d43344" stroke-width="0.85" fill="none"/></svg><svg style="position:absolute;left:36.49px;top:7.52px;overflow:visible" width="50.90" height="2.5"><path d="M0 1 L1.31 0 L2.61 2 L3.92 0 L5.22 2 L6.53 0 L7.83 2 L9.14 0 L10.44 2 L11.75 0 L13.05 2 L14.36 0 L15.66 2 L16.97 0 L18.27 2 L19.58 0 L20.88 2 L22.19 0 L23.49 2 L24.80 0 L26.10 2 L27.41 0 L28.71 2 L30.02 0 L31.32 2 L32.63 0 L33.93 2 L35.24 0 L36.54 2 L37.85 0 L39.15 2 L40.46 0 L41.76 2 L43.07 0 L44.37 2 L45.68 0 L46.98 2 L48.29 0 L49.59 2 L50.90 0" stroke="#d43344" stroke-width="0.85" fill="none"/></svg></div>
<div class="t" style="left:170.50px;top:514.18px;font-size:8.64px;color:#888;font-style:italic;transform:scaleX(1.1447);">€</div>
<div class="t" style="left:292.00px;top:513.43px;font-size:9.47px;color:#2f4b8c;font-weight:bold;transform:scaleX(0.9498);">15,000.00 €</div>
<div class="t" style="left:36.70px;top:534.18px;font-size:8.64px;color:#2a2f3a;font-weight:bold;transform:scaleX(1.0342);">Point mort (jours / 365 j)<svg style="position:absolute;left:24.00px;top:7.52px;overflow:visible" width="19.20" height="2.5"><path d="M0 1 L1.28 0 L2.56 2 L3.84 0 L5.12 2 L6.40 0 L7.68 2 L8.96 0 L10.24 2 L11.52 0 L12.80 2 L14.08 0 L15.36 2 L16.64 0 L17.92 2 L19.20 0" stroke="#d43344" stroke-width="0.85" fill="none"/></svg><svg style="position:absolute;left:48.48px;top:7.52px;overflow:visible" width="21.12" height="2.5"><path d="M0 1 L1.24 0 L2.49 2 L3.73 0 L4.97 2 L6.21 0 L7.46 2 L8.70 0 L9.94 2 L11.18 0 L12.43 2 L13.67 0 L14.91 2 L16.15 0 L17.40 2 L18.64 0 L19.88 2 L21.12 0" stroke="#d43344" stroke-width="0.85" fill="none"/></svg></div>
<div class="t" style="left:170.50px;top:534.18px;font-size:8.64px;color:#888;font-style:italic;transform:scaleX(1.0413);">jours<svg style="position:absolute;left:0.00px;top:7.52px;overflow:visible" width="18.73" height="2.5"><path d="M0 1 L1.25 0 L2.50 2 L3.75 0 L4.99 2 L6.24 0 L7.49 2 L8.74 0 L9.99 2 L11.24 0 L12.48 2 L13.73 0 L14.98 2 L16.23 0 L17.48 2 L18.73 0" stroke="#d43344" stroke-width="0.85" fill="none"/></svg></div>
<div class="t" style="left:324.80px;top:533.43px;font-size:9.47px;color:#2f4b8c;font-weight:bold;transform:scaleX(0.9306);">183</div>
<svg class="ic" style="left:165.50px;top:398.00px" width="3" height="5" viewBox="0 0 3 5"><path d="M0 0l3 2.5-3 2.5z" fill="#222"/></svg>
<svg class="ic" style="left:165.50px;top:418.00px" width="3" height="5" viewBox="0 0 3 5"><path d="M0 0l3 2.5-3 2.5z" fill="#222"/></svg>
<svg class="ic" style="left:422.50px;top:397.00px" width="3" height="5" viewBox="0 0 3 5"><path d="M0 0l3 2.5-3 2.5z" fill="#222"/></svg>
<svg class="ic" style="left:422.50px;top:417.00px" width="3" height="5" viewBox="0 0 3 5"><path d="M0 0l3 2.5-3 2.5z" fill="#222"/></svg>
<svg class="ic" style="left:422.50px;top:437.00px" width="3" height="5" viewBox="0 0 3 5"><path d="M0 0l3 2.5-3 2.5z" fill="#222"/></svg>
<svg class="ic" style="left:422.50px;top:457.00px" width="3" height="5" viewBox="0 0 3 5"><path d="M0 0l3 2.5-3 2.5z" fill="#222"/></svg>
<div class="r" style="left:341px;top:389.50px;width:85px;height:19.50px;overflow:hidden"><div class="t" style="left:1px;top:-5.32px;font-size:8.64px;color:#7a7a7a;font-style:italic;transform:scaleX(0.9000);">Contribution de<svg style="position:absolute;left:48.99px;top:7.52px;overflow:visible" width="9.61" height="2.5"><path d="M0 1 L1.37 0 L2.75 2 L4.12 0 L5.49 2 L6.86 0 L8.24 2 L9.61 0" stroke="#d43344" stroke-width="0.85" fill="none"/></svg></div><div class="t" style="left:1px;top:4.18px;font-size:8.64px;color:#7a7a7a;font-style:italic;transform:scaleX(1.0332);">chaque unité aux<svg style="position:absolute;left:0.00px;top:7.52px;overflow:visible" width="28.34" height="2.5"><path d="M0 1 L1.23 0 L2.46 2 L3.70 0 L4.93 2 L6.16 0 L7.39 2 L8.63 0 L9.86 2 L11.09 0 L12.32 2 L13.56 0 L14.79 2 L16.02 0 L17.25 2 L18.49 0 L19.72 2 L20.95 0 L22.18 2 L23.41 0 L24.65 2 L25.88 0 L27.11 2 L28.34 0" stroke="#d43344" stroke-width="0.85" fill="none"/></svg><svg style="position:absolute;left:30.75px;top:7.52px;overflow:visible" width="18.73" height="2.5"><path d="M0 1 L1.25 0 L2.50 2 L3.75 0 L5.00 2 L6.24 0 L7.49 2 L8.74 0 L9.99 2 L11.24 0 L12.49 2 L13.74 0 L14.99 2 L16.24 0 L17.49 2 L18.73 0" stroke="#d43344" stroke-width="0.85" fill="none"/></svg></div><div class="t" style="left:1px;top:13.68px;font-size:8.64px;color:#7a7a7a;font-style:italic;transform:scaleX(0.9000);">charges fixes et</div></div>
<div class="r" style="left:341px;top:409.50px;width:85px;height:19.50px;overflow:hidden"><div class="t" style="left:1px;top:-5.32px;font-size:8.64px;color:#7a7a7a;font-style:italic;transform:scaleX(0.9000);">Part du CA absorbant<svg style="position:absolute;left:18.25px;top:7.52px;overflow:visible" width="9.61" height="2.5"><path d="M0 1 L1.37 0 L2.75 2 L4.12 0 L5.49 2 L6.86 0 L8.24 2 L9.61 0" stroke="#d43344" stroke-width="0.85" fill="none"/></svg><svg style="position:absolute;left:30.26px;top:7.52px;overflow:visible" width="12.00" height="2.5"><path d="M0 1 L1.50 0 L3.00 2 L4.50 0 L6.00 2 L7.50 0 L9.00 2 L10.50 0 L12.00 2" stroke="#d43344" stroke-width="0.85" fill="none"/></svg><svg style="position:absolute;left:44.34px;top:7.52px;overflow:visible" width="38.43" height="2.5"><path d="M0 1 L1.42 0 L2.85 2 L4.27 0 L5.69 2 L7.12 0 L8.54 2 L9.96 0 L11.39 2 L12.81 0 L14.23 2 L15.66 0 L17.08 2 L18.50 0 L19.93 2 L21.35 0 L22.77 2 L24.20 0 L25.62 2 L27.04 0 L28.47 2 L29.89 0 L31.31 2 L32.74 0 L34.16 2 L35.58 0 L37.01 2 L38.43 0" stroke="#d43344" stroke-width="0.85" fill="none"/></svg></div><div class="t" style="left:1px;top:4.18px;font-size:8.64px;color:#7a7a7a;font-style:italic;transform:scaleX(1.0208);">les charges fixes et<svg style="position:absolute;left:0.00px;top:7.52px;overflow:visible" width="11.04" height="2.5"><path d="M0 1 L1.23 0 L2.45 2 L3.68 0 L4.91 2 L6.13 0 L7.36 2 L8.59 0 L9.82 2 L11.04 0" stroke="#d43344" stroke-width="0.85" fill="none"/></svg><svg style="position:absolute;left:66.75px;top:7.52px;overflow:visible" width="7.21" height="2.5"><path d="M0 1 L1.20 0 L2.40 2 L3.60 0 L4.80 2 L6.01 0 L7.21 2" stroke="#d43344" stroke-width="0.85" fill="none"/></svg><svg style="position:absolute;left:0.00px;top:7.52px;overflow:visible" width="6.72" height="2.5"><path d="M0 1 L1.34 0 L2.69 2 L4.03 0 L5.38 2 L6.72 0" stroke="#d43344" stroke-width="0.85" fill="none"/></svg></div><div class="t" style="left:1px;top:13.68px;font-size:8.64px;color:#7a7a7a;font-style:italic;transform:scaleX(0.9000);">le profit<svg style="position:absolute;left:0.00px;top:7.52px;overflow:visible" width="6.72" height="2.5"><path d="M0 1 L1.34 0 L2.69 2 L4.03 0 L5.38 2 L6.72 0" stroke="#d43344" stroke-width="0.85" fill="none"/></svg><svg style="position:absolute;left:9.12px;top:7.52px;overflow:visible" width="19.21" height="2.5"><path d="M0 1 L1.48 0 L2.96 2 L4.43 0 L5.91 2 L7.39 0 L8.87 2 L10.34 0 L11.82 2 L13.30 0 L14.78 2 L16.26 0 L17.73 2 L19.21 0" stroke="#d43344" stroke-width="0.85" fill="none"/></svg></div></div>
<div class="r" style="left:341px;top:429.50px;width:85px;height:19.50px;overflow:hidden"><div class="t" style="left:1px;top:-5.32px;font-size:8.64px;color:#7a7a7a;font-style:italic;transform:scaleX(0.9000);">Nombre d&#x27;unités à</div><div class="t" style="left:1px;top:4.18px;font-size:8.64px;color:#7a7a7a;font-style:italic;transform:scaleX(1.0612);">vendre pour couvrir<svg style="position:absolute;left:0.00px;top:7.52px;overflow:visible" width="26.42" height="2.5"><path d="M0 1 L1.20 0 L2.40 2 L3.60 0 L4.80 2 L6.00 0 L7.20 2 L8.41 0 L9.61 2 L10.81 0 L12.01 2 L13.21 0 L14.41 2 L15.61 0 L16.81 2 L18.01 0 L19.21 2 L20.41 0 L21.61 2 L22.82 0 L24.02 2 L25.22 0 L26.42 2" stroke="#d43344" stroke-width="0.85" fill="none"/></svg><svg style="position:absolute;left:48.52px;top:7.52px;overflow:visible" width="25.93" height="2.5"><path d="M0 1 L1.23 0 L2.47 2 L3.70 0 L4.94 2 L6.17 0 L7.41 2 L8.64 0 L9.88 2 L11.11 0 L12.35 2 L13.58 0 L14.81 2 L16.05 0 L17.28 2 L18.52 0 L19.75 2 L20.99 0 L22.22 2 L23.46 0 L24.69 2 L25.93 0" stroke="#d43344" stroke-width="0.85" fill="none"/></svg></div><div class="t" style="left:1px;top:13.68px;font-size:8.64px;color:#7a7a7a;font-style:italic;transform:scaleX(0.9000);">tous les coûts<svg style="position:absolute;left:0.00px;top:7.52px;overflow:visible" width="16.33" height="2.5"><path d="M0 1 L1.48 0 L2.97 2 L4.45 0 L5.94 2 L7.42 0 L8.91 2 L10.39 0 L11.88 2 L13.36 0 L14.85 2 L16.33 0" stroke="#d43344" stroke-width="0.85" fill="none"/></svg><svg style="position:absolute;left:32.18px;top:7.52px;overflow:visible" width="20.65" height="2.5"><path d="M0 1 L1.48 0 L2.95 2 L4.43 0 L5.90 2 L7.38 0 L8.85 2 L10.33 0 L11.80 2 L13.28 0 L14.75 2 L16.23 0 L17.70 2 L19.18 0 L20.65 2" stroke="#d43344" stroke-width="0.85" fill="none"/></svg></div></div>
<div class="r" style="left:341px;top:449.50px;width:85px;height:19.50px;overflow:hidden"><div class="t" style="left:1px;top:-5.32px;font-size:8.64px;color:#7a7a7a;font-style:italic;transform:scaleX(0.9000);">CA HT minimum à<svg style="position:absolute;left:0.00px;top:7.52px;overflow:visible" width="12.00" height="2.5"><path d="M0 1 L1.50 0 L3.00 2 L4.50 0 L6.00 2 L7.50 0 L9.00 2 L10.50 0 L12.00 2" stroke="#d43344" stroke-width="0.85" fill="none"/></svg><svg style="position:absolute;left:14.08px;top:7.52px;overflow:visible" width="11.52" height="2.5"><path d="M0 1 L1.44 0 L2.88 2 L4.32 0 L5.76 2 L7.20 0 L8.64 2 L10.08 0 L11.52 2" stroke="#d43344" stroke-width="0.85" fill="none"/></svg><svg style="position:absolute;left:65.45px;top:7.52px;overflow:visible" width="4.80" height="2.5"><path d="M0 1 L1.60 0 L3.20 2 L4.80 0" stroke="#d43344" stroke-width="0.85" fill="none"/></svg></div><div class="t" style="left:1px;top:4.18px;font-size:8.64px;color:#7a7a7a;font-style:italic;transform:scaleX(1.0793);">minimum à<svg style="position:absolute;left:37.45px;top:7.52px;overflow:visible" width="4.80" height="2.5"><path d="M0 1 L1.20 0 L2.40 2 L3.60 0 L4.80 2" stroke="#d43344" stroke-width="0.85" fill="none"/></svg></div><div class="t" style="left:1px;top:13.68px;font-size:8.64px;color:#7a7a7a;font-style:italic;transform:scaleX(0.9000);">atteindre<svg style="position:absolute;left:0.00px;top:7.52px;overflow:visible" width="33.62" height="2.5"><path d="M0 1 L1.46 0 L2.92 2 L4.39 0 L5.85 2 L7.31 0 L8.77 2 L10.23 0 L11.70 2 L13.16 0 L14.62 2 L16.08 0 L17.54 2 L19.01 0 L20.47 2 L21.93 0 L23.39 2 L24.85 0 L26.32 2 L27.78 0 L29.24 2 L30.70 0 L32.16 2 L33.62 0" stroke="#d43344" stroke-width="0.85" fill="none"/></svg></div></div>
<div class="r" style="left:341px;top:469.50px;width:85px;height:19.50px;overflow:hidden"><div class="t" style="left:1px;top:0.43px;font-size:8.92px;color:#7a7a7a;font-style:italic;transform:scaleX(1.0050);">Écart entre ventes<svg style="position:absolute;left:0.00px;top:7.77px;overflow:visible" width="20.80" height="2.5"><path d="M0 1 L1.30 0 L2.60 2 L3.90 0 L5.20 2 L6.50 0 L7.80 2 L9.10 0 L10.40 2 L11.70 0 L13.00 2 L14.30 0 L15.60 2 L16.90 0 L18.20 2 L19.50 0 L20.80 2" stroke="#d43344" stroke-width="0.85" fill="none"/></svg><svg style="position:absolute;left:23.28px;top:7.77px;overflow:visible" width="20.32" height="2.5"><path d="M0 1 L1.27 0 L2.54 2 L3.81 0 L5.08 2 L6.35 0 L7.62 2 L8.89 0 L10.16 2 L11.43 0 L12.70 2 L13.97 0 L15.24 2 L16.51 0 L17.78 2 L19.05 0 L20.32 2" stroke="#d43344" stroke-width="0.85" fill="none"/></svg><svg style="position:absolute;left:46.07px;top:7.77px;overflow:visible" width="26.26" height="2.5"><path d="M0 1 L1.31 0 L2.63 2 L3.94 0 L5.25 2 L6.57 0 L7.88 2 L9.19 0 L10.50 2 L11.82 0 L13.13 2 L14.44 0 L15.76 2 L17.07 0 L18.38 2 L19.70 0 L21.01 2 L22.32 0 L23.64 2 L24.95 0 L26.26 2" stroke="#d43344" stroke-width="0.85" fill="none"/></svg></div><div class="t" style="left:1px;top:9.93px;font-size:8.92px;color:#7a7a7a;font-style:italic;transform:scaleX(0.9931);">prévues et seuil<svg style="position:absolute;left:0.00px;top:7.77px;overflow:visible" width="31.71" height="2.5"><path d="M0 1 L1.32 0 L2.64 2 L3.96 0 L5.29 2 L6.61 0 L7.93 2 L9.25 0 L10.57 2 L11.89 0 L13.21 2 L14.53 0 L15.86 2 L17.18 0 L18.50 2 L19.82 0 L21.14 2 L22.46 0 L23.78 2 L25.10 0 L26.43 2 L27.75 0 L29.07 2 L30.39 0 L31.71 2" stroke="#d43344" stroke-width="0.85" fill="none"/></svg><svg style="position:absolute;left:34.19px;top:7.77px;overflow:visible" width="7.43" height="2.5"><path d="M0 1 L1.24 0 L2.48 2 L3.72 0 L4.96 2 L6.19 0 L7.43 2" stroke="#d43344" stroke-width="0.85" fill="none"/></svg><svg style="position:absolute;left:44.10px;top:7.77px;overflow:visible" width="18.33" height="2.5"><path d="M0 1 L1.31 0 L2.62 2 L3.93 0 L5.24 2 L6.55 0 L7.86 2 L9.17 0 L10.48 2 L11.78 0 L13.09 2 L14.40 0 L15.71 2 L17.02 0 L18.33 2" stroke="#d43344" stroke-width="0.85" fill="none"/></svg></div></div>
<div class="r" style="left:341px;top:489.50px;width:85px;height:19.50px;overflow:hidden"><div class="t" style="left:1px;top:0.43px;font-size:8.92px;color:#7a7a7a;font-style:italic;transform:scaleX(0.9709);">Coussin de sécurité<svg style="position:absolute;left:0.00px;top:7.77px;overflow:visible" width="32.20" height="2.5"><path d="M0 1 L1.34 0 L2.68 2 L4.03 0 L5.37 2 L6.71 0 L8.05 2 L9.39 0 L10.73 2 L12.08 0 L13.42 2 L14.76 0 L16.10 2 L17.44 0 L18.79 2 L20.13 0 L21.47 2 L22.81 0 L24.15 2 L25.49 0 L26.84 2 L28.18 0 L29.52 2 L30.86 0 L32.20 2" stroke="#d43344" stroke-width="0.85" fill="none"/></svg><svg style="position:absolute;left:34.68px;top:7.77px;overflow:visible" width="9.91" height="2.5"><path d="M0 1 L1.42 0 L2.83 2 L4.25 0 L5.67 2 L7.08 0 L8.50 2 L9.91 0" stroke="#d43344" stroke-width="0.85" fill="none"/></svg><svg style="position:absolute;left:47.07px;top:7.77px;overflow:visible" width="31.21" height="2.5"><path d="M0 1 L1.36 0 L2.71 2 L4.07 0 L5.43 2 L6.78 0 L8.14 2 L9.50 0 L10.86 2 L12.21 0 L13.57 2 L14.93 0 L16.28 2 L17.64 0 L19.00 2 L20.35 0 L21.71 2 L23.07 0 L24.43 2 L25.78 0 L27.14 2 L28.50 0 L29.85 2 L31.21 0" stroke="#d43344" stroke-width="0.85" fill="none"/></svg></div><div class="t" style="left:1px;top:9.93px;font-size:8.92px;color:#7a7a7a;font-style:italic;transform:scaleX(1.1011);">relatif<svg style="position:absolute;left:0.00px;top:7.77px;overflow:visible" width="21.80" height="2.5"><path d="M0 1 L1.21 0 L2.42 2 L3.63 0 L4.84 2 L6.05 0 L7.27 2 L8.48 0 L9.69 2 L10.90 0 L12.11 2 L13.32 0 L14.53 2 L15.74 0 L16.95 2 L18.16 0 L19.38 2 L20.59 0 L21.80 2" stroke="#d43344" stroke-width="0.85" fill="none"/></svg></div></div>
<div class="r" style="left:341px;top:509.50px;width:85px;height:19.50px;overflow:hidden"><div class="t" style="left:1px;top:0.43px;font-size:8.92px;color:#7a7a7a;font-style:italic;">Bénéfice ou perte<svg style="position:absolute;left:0.00px;top:7.77px;overflow:visible" width="34.69" height="2.5"><path d="M0 1 L1.28 0 L2.57 2 L3.85 0 L5.14 2 L6.42 0 L7.71 2 L8.99 0 L10.28 2 L11.56 0 L12.85 2 L14.13 0 L15.42 2 L16.70 0 L17.99 2 L19.27 0 L20.56 2 L21.84 0 L23.12 2 L24.41 0 L25.69 2 L26.98 0 L28.26 2 L29.55 0 L30.83 2 L32.12 0 L33.40 2 L34.69 0" stroke="#d43344" stroke-width="0.85" fill="none"/></svg><svg style="position:absolute;left:37.16px;top:7.77px;overflow:visible" width="9.91" height="2.5"><path d="M0 1 L1.24 0 L2.48 2 L3.72 0 L4.96 2 L6.20 0 L7.44 2 L8.67 0 L9.91 2" stroke="#d43344" stroke-width="0.85" fill="none"/></svg><svg style="position:absolute;left:49.55px;top:7.77px;overflow:visible" width="20.32" height="2.5"><path d="M0 1 L1.27 0 L2.54 2 L3.81 0 L5.08 2 L6.35 0 L7.62 2 L8.89 0 L10.16 2 L11.43 0 L12.70 2 L13.97 0 L15.24 2 L16.51 0 L17.78 2 L19.05 0 L20.32 2" stroke="#d43344" stroke-width="0.85" fill="none"/></svg></div><div class="t" style="left:1px;top:9.93px;font-size:8.92px;color:#7a7a7a;font-style:italic;transform:scaleX(0.9879);">estimé(e)<svg style="position:absolute;left:0.00px;top:7.77px;overflow:visible" width="26.25" height="2.5"><path d="M0 1 L1.31 0 L2.63 2 L3.94 0 L5.25 2 L6.56 0 L7.88 2 L9.19 0 L10.50 2 L11.81 0 L13.13 2 L14.44 0 L15.75 2 L17.07 0 L18.38 2 L19.69 0 L21.00 2 L22.32 0 L23.63 2 L24.94 0 L26.25 2" stroke="#d43344" stroke-width="0.85" fill="none"/></svg></div></div>
<div class="r" style="left:341px;top:529.50px;width:85px;height:19.50px;overflow:hidden"><div class="t" style="left:1px;top:0.43px;font-size:8.92px;color:#7a7a7a;font-style:italic;">Jour de l&#x27;année où le<svg style="position:absolute;left:0.00px;top:7.77px;overflow:visible" width="17.34" height="2.5"><path d="M0 1 L1.33 0 L2.67 2 L4.00 0 L5.34 2 L6.67 0 L8.00 2 L9.34 0 L10.67 2 L12.00 0 L13.34 2 L14.67 0 L16.01 2 L17.34 0" stroke="#d43344" stroke-width="0.85" fill="none"/></svg><svg style="position:absolute;left:19.82px;top:7.77px;overflow:visible" width="9.91" height="2.5"><path d="M0 1 L1.24 0 L2.48 2 L3.72 0 L4.96 2 L6.20 0 L7.44 2 L8.67 0 L9.91 2" stroke="#d43344" stroke-width="0.85" fill="none"/></svg><svg style="position:absolute;left:32.21px;top:7.77px;overflow:visible" width="28.47" height="2.5"><path d="M0 1 L1.29 0 L2.59 2 L3.88 0 L5.18 2 L6.47 0 L7.76 2 L9.06 0 L10.35 2 L11.65 0 L12.94 2 L14.23 0 L15.53 2 L16.82 0 L18.12 2 L19.41 0 L20.70 2 L22.00 0 L23.29 2 L24.59 0 L25.88 2 L27.17 0 L28.47 2" stroke="#d43344" stroke-width="0.85" fill="none"/></svg><svg style="position:absolute;left:63.15px;top:7.77px;overflow:visible" width="9.91" height="2.5"><path d="M0 1 L1.24 0 L2.48 2 L3.72 0 L4.96 2 L6.20 0 L7.44 2 L8.67 0 L9.91 2" stroke="#d43344" stroke-width="0.85" fill="none"/></svg><svg style="position:absolute;left:75.54px;top:7.77px;overflow:visible" width="6.94" height="2.5"><path d="M0 1 L1.39 0 L2.77 2 L4.16 0 L5.55 2 L6.94 0" stroke="#d43344" stroke-width="0.85" fill="none"/></svg></div><div class="t" style="left:1px;top:9.93px;font-size:8.92px;color:#7a7a7a;font-style:italic;transform:scaleX(1.0209);">seuil est atteint<svg style="position:absolute;left:0.00px;top:7.77px;overflow:visible" width="18.33" height="2.5"><path d="M0 1 L1.31 0 L2.62 2 L3.93 0 L5.24 2 L6.55 0 L7.86 2 L9.17 0 L10.48 2 L11.78 0 L13.09 2 L14.40 0 L15.71 2 L17.02 0 L18.33 2" stroke="#d43344" stroke-width="0.85" fill="none"/></svg><svg style="position:absolute;left:35.18px;top:7.77px;overflow:visible" width="24.28" height="2.5"><path d="M0 1 L1.28 0 L2.56 2 L3.83 0 L5.11 2 L6.39 0 L7.67 2 L8.95 0 L10.22 2 L11.50 0 L12.78 2 L14.06 0 L15.34 2 L16.61 0 L17.89 2 L19.17 0 L20.45 2 L21.73 0 L23.00 2 L24.28 0" stroke="#d43344" stroke-width="0.85" fill="none"/></svg></div></div>
<div class="r" style="left:35.50px;top:564.00px;width:562.50px;height:4.50px;background:#2563eb;"></div>
<div class="r" style="left:0;top:563.5px;width:600px;height:5px;overflow:hidden"><div class="t" style="left:41.30px;top:-4.07px;font-size:9.47px;color:#fff;font-weight:bold;transform:scaleX(0.9326);">C — SYNTHÈSE AUTOMATIQUE</div></div>
<div class="r" style="left:35.00px;top:568.50px;width:305.70px;height:34.00px;background:#10b981;"></div>
<div class="r" style="left:84.50px;top:581.20px;width:7.00px;height:9.10px;background:none;border:1px solid #fff;"></div>
<div class="t" style="left:86.30px;top:582.17px;font-size:7.54px;color:#fff;font-weight:bold;transform:scaleX(0.7593);">?</div>
<div class="t" style="left:95.00px;top:579.08px;font-size:12.62px;color:#fff;font-weight:bold;transform:scaleX(0.7966);">Activité rentable — Résultat : 15,000.00 €</div>
<div class="r" style="left:35.00px;top:602.50px;width:305.70px;height:29.50px;background:#dbeafe;"></div>
<div class="r" style="left:34.50px;top:602.50px;width:2.00px;height:29.50px;background:#3b82f6;"></div>
<div class="r" style="left:35.00px;top:602.00px;width:305.70px;height:1.00px;background:#3b82f6;"></div>
<div class="t" style="left:64.80px;top:612.07px;font-size:11.52px;color:#1e3a8a;font-weight:bold;transform:scaleX(0.8141);">Point mort atteint au 183e jour — Seuil CA : 25,000.00 €</div>
<div class="r" style="left:0.00px;top:221.80px;width:1151.00px;height:1.20px;background:#4a4a4a;"></div>
<div class="r" style="left:22.00px;top:113.50px;width:14.00px;height:7.50px;background:#fff;"></div>
<div class="r" style="left:35.00px;top:114.00px;width:1.50px;height:8.00px;background:#3d8de0;"></div>
<div class="r" style="left:33.50px;top:120.50px;width:3.50px;height:3.50px;background:#3d8de0;"></div>
</body></html>
